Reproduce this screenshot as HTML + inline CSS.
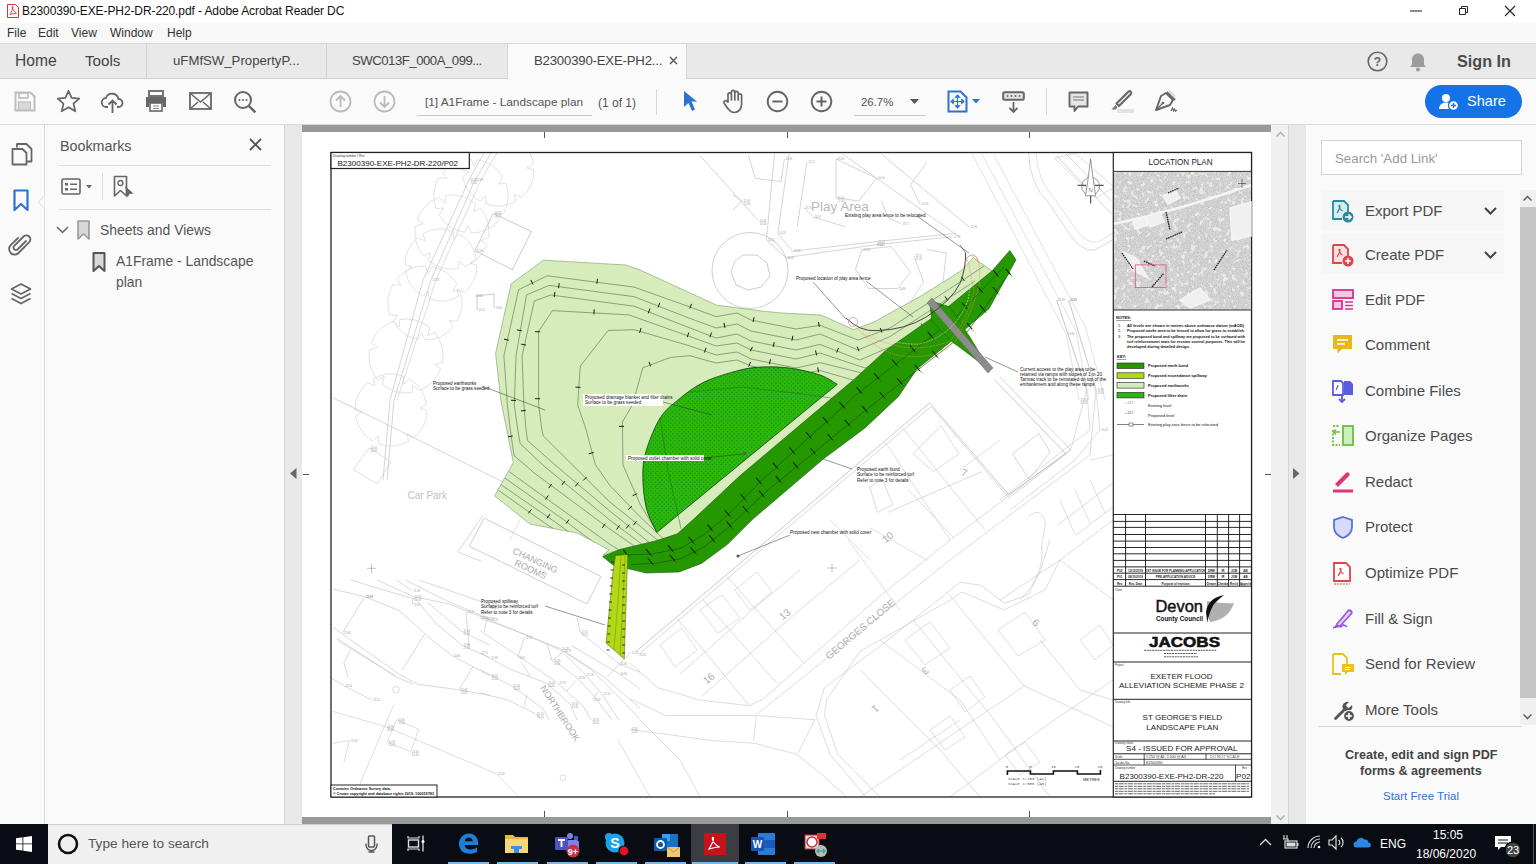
<!DOCTYPE html>
<html><head><meta charset="utf-8">
<style>
*{box-sizing:border-box;margin:0;padding:0}
html,body{width:1536px;height:864px;overflow:hidden;background:#fafafa;font-family:"Liberation Sans",sans-serif;color:#333}
.a{position:absolute}
.t{position:absolute;white-space:nowrap;line-height:1}
svg{position:absolute;overflow:visible}
</style></head><body>
<!-- title bar -->
<div class="a" style="left:0;top:0;width:1536px;height:23px;background:#fff"></div>
<svg style="left:6px;top:3px" width="14" height="16" viewBox="0 0 14 16"><path d="M1.5 1.5h8l3 3v10h-11z" fill="#fff" stroke="#d33" stroke-width="1"/><path d="M4 12c2-4 3-7 3-8s-1-1-1 0 2 5 4 6-5 0-6 2" fill="none" stroke="#d33" stroke-width="0.9"/></svg>
<div class="t" style="left:22px;top:5px;font-size:12px;color:#111;letter-spacing:-0.1px">B2300390-EXE-PH2-DR-220.pdf - Adobe Acrobat Reader DC</div>
<svg style="left:1410px;top:10px" width="12" height="2"><rect width="12" height="1" y="0.5" fill="#222"/></svg>
<svg style="left:1457px;top:5px" width="12" height="12" viewBox="0 0 12 12"><path d="M2.5 3.5h6v6h-6z M4.5 3.5v-2h6v6h-2" fill="none" stroke="#222" stroke-width="1"/></svg>
<svg style="left:1504px;top:5px" width="12" height="12" viewBox="0 0 12 12"><path d="M1 1l10 10M11 1L1 11" stroke="#222" stroke-width="1.1"/></svg>
<!-- menu bar -->
<div class="a" style="left:0;top:23px;width:1536px;height:20px;background:#f8f8f8"></div>
<div class="t" style="left:7px;top:27px;font-size:12px;color:#333">File</div>
<div class="t" style="left:38px;top:27px;font-size:12px;color:#333">Edit</div>
<div class="t" style="left:71px;top:27px;font-size:12px;color:#333">View</div>
<div class="t" style="left:110px;top:27px;font-size:12px;color:#333">Window</div>
<div class="t" style="left:167px;top:27px;font-size:12px;color:#333">Help</div>
<!-- tab bar -->
<div class="a" style="left:0;top:43px;width:1536px;height:36px;background:#e9e9e9;border-top:1px solid #d6d6d6;border-bottom:1px solid #d0d0d0"></div>
<div class="a" style="left:146px;top:44px;width:1px;height:34px;background:#d2d2d2"></div>
<div class="a" style="left:326px;top:44px;width:1px;height:34px;background:#d2d2d2"></div>
<div class="a" style="left:507px;top:44px;width:180px;height:35px;background:#fafafa;border-left:1px solid #d6d6d6;border-right:1px solid #d6d6d6"></div>
<div class="t" style="left:15px;top:53px;font-size:15.6px;color:#444">Home</div>
<div class="t" style="left:85px;top:53px;font-size:15.2px;color:#444">Tools</div>
<div class="t" style="left:173px;top:54px;font-size:13.2px;color:#444">uFMfSW_PropertyP...</div>
<div class="t" style="left:352px;top:54px;font-size:13.2px;color:#444;letter-spacing:-0.5px">SWC013F_000A_099...</div>
<div class="t" style="left:534px;top:54px;font-size:13.2px;color:#444;letter-spacing:-0.2px">B2300390-EXE-PH2...</div>
<svg style="left:669px;top:56px" width="9" height="9" viewBox="0 0 9 9"><path d="M1 1l7 7M8 1L1 8" stroke="#555" stroke-width="1.4"/></svg>
<svg style="left:1367px;top:51px" width="21" height="21" viewBox="0 0 21 21"><circle cx="10.5" cy="10.5" r="9.3" fill="none" stroke="#666" stroke-width="1.6"/><text x="10.5" y="15" text-anchor="middle" font-size="12" font-family="Liberation Sans" font-weight="700" fill="#666">?</text></svg>
<svg style="left:1409px;top:52px" width="18" height="20" viewBox="0 0 18 20"><path d="M9 1.5c3.5 0 6 2.5 6 6v5l2 2.5H1L3 12.5v-5c0-3.5 2.5-6 6-6z" fill="#9c9c9c"/><circle cx="9" cy="17.5" r="2" fill="#9c9c9c"/></svg>
<div class="t" style="left:1457px;top:53px;font-size:16.2px;font-weight:700;color:#4b4b4b">Sign In</div>
<!-- toolbar -->
<div class="a" style="left:0;top:79px;width:1536px;height:46px;background:#fafafa;border-bottom:1px solid #d9d9d9"></div>

<!-- toolbar icons -->
<svg style="left:14px;top:91px" width="22" height="21" viewBox="0 0 22 21"><path d="M1.5 1.5h15l4 4v14h-19z" fill="none" stroke="#bdbdbd" stroke-width="2"/><rect x="5" y="2" width="9" height="5" fill="none" stroke="#bdbdbd" stroke-width="1.6"/><rect x="4.5" y="11" width="12" height="8" fill="#d8d8d8" stroke="#bdbdbd" stroke-width="1.2"/></svg>
<svg style="left:56px;top:89px" width="25" height="25" viewBox="0 0 25 25"><path d="M12.5 1.8l3.1 7.1 7.7.7-5.8 5.1 1.8 7.6-6.8-4-6.8 4 1.8-7.6-5.8-5.1 7.7-.7z" fill="none" stroke="#666" stroke-width="1.7" stroke-linejoin="round"/></svg>
<svg style="left:101px;top:91px" width="23" height="23" viewBox="0 0 23 23"><path d="M7 16H5.5A4.5 4.5 0 0 1 5 7a6.5 6.5 0 0 1 12.5 1A4 4 0 0 1 17.5 16H16" fill="none" stroke="#666" stroke-width="1.8"/><path d="M11.5 22V10M7.5 13.5l4-4 4 4" fill="none" stroke="#666" stroke-width="1.8"/></svg>
<svg style="left:145px;top:90px" width="22" height="22" viewBox="0 0 22 22"><rect x="4" y="1" width="14" height="5" fill="none" stroke="#666" stroke-width="1.8"/><path d="M1 7h20v10h-3v-4H4v4H1z" fill="#666"/><rect x="5" y="13" width="12" height="8" fill="#fff" stroke="#666" stroke-width="1.6"/><path d="M8 16h6M8 18.5h6" stroke="#888" stroke-width="1"/></svg>
<svg style="left:189px;top:92px" width="23" height="18" viewBox="0 0 23 18"><rect x="1" y="1" width="21" height="16" fill="none" stroke="#666" stroke-width="1.8"/><path d="M1 1l10.5 9L22 1M1 17l8-7M22 17l-8-7" fill="none" stroke="#666" stroke-width="1.5"/></svg>
<svg style="left:233px;top:90px" width="24" height="24" viewBox="0 0 24 24"><circle cx="10" cy="10" r="8" fill="none" stroke="#666" stroke-width="2"/><path d="M15.8 15.8l6.5 6.5" stroke="#666" stroke-width="2.4"/><circle cx="6.5" cy="10" r="1" fill="#666"/><circle cx="10" cy="10" r="1" fill="#666"/><circle cx="13.5" cy="10" r="1" fill="#666"/></svg>
<svg style="left:329px;top:90px" width="23" height="23" viewBox="0 0 23 23"><circle cx="11.5" cy="11.5" r="10" fill="none" stroke="#bbb" stroke-width="1.8"/><path d="M11.5 17V6M7 10.5l4.5-4.5 4.5 4.5" fill="none" stroke="#bbb" stroke-width="1.8"/></svg>
<svg style="left:373px;top:90px" width="23" height="23" viewBox="0 0 23 23"><circle cx="11.5" cy="11.5" r="10" fill="none" stroke="#bbb" stroke-width="1.8"/><path d="M11.5 6v11M7 12.5l4.5 4.5 4.5-4.5" fill="none" stroke="#bbb" stroke-width="1.8"/></svg>
<div class="t" style="left:425px;top:97px;font-size:11.8px;color:#555">[1] A1Frame - Landscape plan</div>
<div class="a" style="left:417px;top:115px;width:175px;height:1px;background:#c8c8c8"></div>
<div class="t" style="left:598px;top:97px;font-size:12px;color:#555">(1 of 1)</div>
<div class="a" style="left:656px;top:89px;width:1px;height:26px;background:#d8d8d8"></div>
<svg style="left:683px;top:90px" width="15" height="22" viewBox="0 0 15 22"><path d="M1 1l13 10.5H8.5l3.5 8-3 1.5-3.5-8L1 17z" fill="#2d74cf"/></svg>
<svg style="left:722px;top:89px" width="24" height="25" viewBox="0 0 24 25"><path d="M6 13V5.5a1.7 1.7 0 0 1 3.4 0V11V3a1.7 1.7 0 0 1 3.4 0v8V4a1.7 1.7 0 0 1 3.4 0v7V6.5a1.7 1.7 0 0 1 3.4 0V15c0 5-3 8.5-7.5 8.5-3.5 0-5-2-7-5L2 14a1.7 1.7 0 0 1 2.8-1.8z" fill="none" stroke="#666" stroke-width="1.7" stroke-linejoin="round"/></svg>
<svg style="left:766px;top:90px" width="23" height="23" viewBox="0 0 23 23"><circle cx="11.5" cy="11.5" r="9.8" fill="none" stroke="#666" stroke-width="1.9"/><path d="M6.5 11.5h10" stroke="#666" stroke-width="2"/></svg>
<svg style="left:810px;top:90px" width="23" height="23" viewBox="0 0 23 23"><circle cx="11.5" cy="11.5" r="9.8" fill="none" stroke="#666" stroke-width="1.9"/><path d="M6.5 11.5h10M11.5 6.5v10" stroke="#666" stroke-width="2"/></svg>
<div class="t" style="left:861px;top:97px;font-size:11.4px;color:#555">26.7%</div>
<svg style="left:910px;top:99px" width="9" height="6"><path d="M0 0h9L4.5 5z" fill="#555"/></svg>
<div class="a" style="left:854px;top:115px;width:72px;height:1px;background:#c8c8c8"></div>
<svg style="left:947px;top:90px" width="21" height="23" viewBox="0 0 21 23"><path d="M1.5 1.5h12l6 6v14h-18z" fill="none" stroke="#2d74cf" stroke-width="2"/><path d="M10.5 6v11M5 11.5h11M10.5 5l-2 2.2h4zM10.5 18l-2-2.2h4zM4 11.5l2.2-2v4zM17 11.5l-2.2-2v4z" fill="#2d74cf" stroke="#2d74cf" stroke-width="1.1"/></svg>
<svg style="left:972px;top:99px" width="8" height="5"><path d="M0 0h8L4 4.5z" fill="#2d74cf"/></svg>
<svg style="left:1002px;top:91px" width="23" height="22" viewBox="0 0 23 22"><rect x="1.2" y="1.2" width="20.6" height="7.6" rx="1.5" fill="#e6e6e6" stroke="#666" stroke-width="2"/><circle cx="5.5" cy="5" r="1" fill="#666"/><circle cx="9.5" cy="5" r="1" fill="#666"/><circle cx="13.5" cy="5" r="1" fill="#666"/><circle cx="17.5" cy="5" r="1" fill="#666"/><path d="M11.5 11v10M7.5 17l4 4 4-4" fill="none" stroke="#666" stroke-width="1.8"/></svg>
<div class="a" style="left:1046px;top:88px;width:1px;height:27px;background:#d8d8d8"></div>
<svg style="left:1068px;top:91px" width="21" height="22" viewBox="0 0 21 22"><path d="M1.5 1.5h18v14H10l-3.5 4.5v-4.5h-5z" fill="#e6e6e6" stroke="#666" stroke-width="1.9" stroke-linejoin="round"/><path d="M5 6h11M5 9h11" stroke="#777" stroke-width="1"/></svg>
<svg style="left:1110px;top:89px" width="25" height="25" viewBox="0 0 25 25"><path d="M9 17l12-12a1.8 1.8 0 0 0-2.5-2.5L6.5 14.5z" fill="#e6e6e6" stroke="#666" stroke-width="2" stroke-linejoin="round"/><path d="M5.5 16l-4 4.5h4l2-2" fill="#777"/><rect x="7" y="20" width="17" height="4" fill="#e2e2e2"/></svg>
<svg style="left:1154px;top:90px" width="25" height="23" viewBox="0 0 25 23"><path d="M12 3l-5 3-5 14 14-5 3-5z" fill="none" stroke="#666" stroke-width="1.9" stroke-linejoin="round"/><path d="M13 2l8 8" stroke="#666" stroke-width="2"/><path d="M15 1l6 6" stroke="#ddd" stroke-width="2.5"/><path d="M2.5 19.5l6-6" stroke="#666" stroke-width="1.3"/><circle cx="9" cy="13" r="1.3" fill="#666"/><path d="M17 21l1.5-3 1 3 1-2 1 2 1.5-1" fill="none" stroke="#666" stroke-width="1.2"/></svg>
<div class="a" style="left:1425px;top:85px;width:97px;height:33px;border-radius:17px;background:#1473e6"></div>
<svg style="left:1439px;top:93px" width="22" height="18" viewBox="0 0 22 18"><circle cx="7" cy="5" r="4" fill="#fff"/><path d="M0 16c0-4 3-6.5 7-6.5s7 2.5 7 6.5z" fill="#fff"/><circle cx="14.5" cy="12.5" r="5" fill="#fff" stroke="#1473e6" stroke-width="1.3"/><path d="M14.5 10v5M12 12.5h5" stroke="#1473e6" stroke-width="1.4"/></svg>
<div class="t" style="left:1467px;top:94px;font-size:14.6px;color:#fff">Share</div>

<!-- left rail -->
<div class="a" style="left:0;top:125px;width:45px;height:699px;background:#fafafa;border-right:1px solid #dcdcdc"></div>
<svg style="left:11px;top:142px" width="22" height="24" viewBox="0 0 22 24"><path d="M6 5.5V2h9.5l5 5v12.5H16" fill="none" stroke="#666" stroke-width="1.8" stroke-linejoin="round"/><path d="M1.5 7h10l4 4v11.5h-14z" fill="none" stroke="#666" stroke-width="1.8" stroke-linejoin="round"/></svg>
<svg style="left:13px;top:189px" width="16" height="23" viewBox="0 0 16 23"><path d="M1.5 1.5h13v19.5l-6.5-6-6.5 6z" fill="none" stroke="#2d74cf" stroke-width="2.2" stroke-linejoin="round"/></svg>
<svg style="left:38px;top:195px" width="8" height="14"><path d="M7 0L0 7l7 7z" fill="#fafafa" stroke="#dcdcdc" stroke-width="1"/><rect x="7" y="0" width="2" height="14" fill="#fafafa"/></svg>
<svg style="left:10px;top:233px" width="22" height="24" viewBox="0 0 22 24"><path d="M16 8l-8.5 8.5a2.5 2.5 0 0 1-3.5-3.5l9.5-9.5a4 4 0 0 1 5.7 5.7L8.5 20a5.5 5.5 0 0 1-7.8-7.8L8 5" fill="none" stroke="#666" stroke-width="1.8" stroke-linecap="round"/></svg>
<svg style="left:10px;top:282px" width="22" height="24" viewBox="0 0 22 24"><path d="M11 2l9.5 5-9.5 5-9.5-5z" fill="none" stroke="#666" stroke-width="1.7" stroke-linejoin="round"/><path d="M1.5 11.5l9.5 5 9.5-5M1.5 16.5l9.5 5 9.5-5" fill="none" stroke="#666" stroke-width="1.7" stroke-linejoin="round"/></svg>
<!-- bookmarks panel -->
<div class="a" style="left:45px;top:125px;width:240px;height:699px;background:#fafafa;border-right:1px solid #d4d4d4"></div>
<div class="t" style="left:60px;top:139px;font-size:14.3px;color:#555">Bookmarks</div>
<svg style="left:249px;top:138px" width="13" height="13" viewBox="0 0 13 13"><path d="M1 1l11 11M12 1L1 12" stroke="#555" stroke-width="1.8"/></svg>
<div class="a" style="left:59px;top:165px;width:212px;height:1px;background:#dedede"></div>
<svg style="left:61px;top:178px" width="32" height="17" viewBox="0 0 32 17"><rect x="1" y="1" width="18" height="15" rx="1.5" fill="none" stroke="#666" stroke-width="1.6"/><rect x="4" y="5" width="3" height="2.5" fill="#666"/><rect x="4" y="10" width="3" height="2.5" fill="#666"/><path d="M9 6.2h7M9 11.2h7" stroke="#666" stroke-width="1.6"/><path d="M25 7h6l-3 3.5z" fill="#666"/></svg>
<div class="a" style="left:102px;top:173px;width:1px;height:27px;background:#dedede"></div>
<svg style="left:113px;top:175px" width="22" height="24" viewBox="0 0 22 24"><path d="M1.5 1.5h12v19.5l-6-5.5-6 5.5z" fill="none" stroke="#666" stroke-width="1.6" stroke-linejoin="round"/><circle cx="7.5" cy="8" r="2.5" fill="none" stroke="#666" stroke-width="1.3"/><path d="M12 11l8.5 7.5-4 .5-2 3.5z" fill="#666"/></svg>
<div class="a" style="left:59px;top:209px;width:212px;height:1px;background:#dedede"></div>
<svg style="left:56px;top:226px" width="13" height="8" viewBox="0 0 13 8"><path d="M1 1l5.5 5.5L12 1" fill="none" stroke="#666" stroke-width="1.5"/></svg>
<svg style="left:77px;top:220px" width="13" height="20" viewBox="0 0 13 20"><path d="M1 1h11v18l-5.5-5-5.5 5z" fill="#d8d8d8" stroke="#999" stroke-width="1.6" stroke-linejoin="round"/></svg>
<div class="t" style="left:100px;top:224px;font-size:13.9px;color:#555">Sheets and Views</div>
<svg style="left:92px;top:252px" width="14" height="20" viewBox="0 0 14 20"><path d="M1.5 1h11v18l-5.5-5-5.5 5z" fill="#d8d8d8" stroke="#555" stroke-width="2" stroke-linejoin="round"/></svg>
<div class="t" style="left:116px;top:255px;font-size:13.9px;color:#555">A1Frame - Landscape</div>
<div class="t" style="left:116px;top:276px;font-size:13.9px;color:#555">plan</div>
<!-- gray strips -->
<div class="a" style="left:285px;top:125px;width:17px;height:699px;background:#e8e8e8"></div>
<svg style="left:290px;top:468px" width="7" height="11"><path d="M6.5 0v11L0 5.5z" fill="#666"/></svg>
<div class="a" style="left:302px;top:125px;width:969px;height:7px;background:#999"></div>
<div class="a" style="left:302px;top:817px;width:969px;height:7px;background:#999"></div>
<div class="a" style="left:302px;top:132px;width:969px;height:685px;background:#fff"></div>
<!--DRAWING-->
<svg style="left:302px;top:132px" width="969" height="685" viewBox="302 132 969 685">
<defs>
<filter id="noise" x="0" y="0" width="100%" height="100%"><feTurbulence type="fractalNoise" baseFrequency="1.2" numOctaves="1" seed="3"/><feColorMatrix type="matrix" values="0 0 0 0 0.55  0 0 0 0 0.55  0 0 0 0 0.55  7 0 0 0 -3.3"/></filter>
<filter id="blob" x="0" y="0" width="100%" height="100%"><feTurbulence type="fractalNoise" baseFrequency="0.22" numOctaves="2" seed="7"/><feColorMatrix type="matrix" values="0 0 0 0 1  0 0 0 0 1  0 0 0 0 1  9 0 0 0 -5.2"/></filter>
<pattern id="dots" width="3.1" height="3.1" patternUnits="userSpaceOnUse" patternTransform="rotate(45)"><rect width="3.1" height="3.1" fill="#2cbb04"/><circle cx="1.5" cy="1.5" r="0.75" fill="#178a30"/></pattern>
<clipPath id="fr"><rect x="331" y="152.5" width="782" height="644.5"/></clipPath>
</defs>
<rect x="544" y="132" width="1" height="6" fill="#555"/><rect x="544" y="811" width="1" height="6" fill="#555"/>
<rect x="787" y="132" width="1" height="6" fill="#555"/><rect x="787" y="811" width="1" height="6" fill="#555"/>
<rect x="1029" y="132" width="1" height="6" fill="#555"/><rect x="1029" y="811" width="1" height="6" fill="#555"/>
<rect x="303" y="474" width="6" height="1" fill="#555"/><rect x="1265" y="474" width="6" height="1" fill="#555"/>
<g clip-path="url(#fr)"><polyline points="484.0,153.0 469.0,180.0 423.0,280.0 390.0,400.0 383.0,480.0" fill="none" stroke="#b8b8b8" stroke-width="0.6"/><polyline points="491.0,153.0 475.0,180.0 431.0,280.0 394.0,400.0 387.0,480.0" fill="none" stroke="#b8b8b8" stroke-width="0.6"/><polyline points="497.0,153.0 481.0,180.0 436.0,280.0 397.0,400.0" fill="none" stroke="#c8c8c8" stroke-width="0.6"/><path d="M534.0 170.0A36 36 0 0 1 521.5 197.3L514.2 194.1L516.0 201.2M516.0 201.2A36 36 0 0 1 486.2 204.0L485.3 196.0L480.0 201.2M480.0 201.2A36 36 0 0 1 462.6 176.7L469.1 172.0L462.0 170.0M462.0 170.0A36 36 0 0 1 474.5 142.7L481.8 145.9L480.0 138.8M480.0 138.8A36 36 0 0 1 509.8 136.0L510.7 144.0L516.0 138.8M516.0 138.8A36 36 0 0 1 533.4 163.3L526.9 168.0L534.0 170.0" fill="none" stroke="#cfcfcf" stroke-width="0.6"/><path d="M499.3 219.8A37 37 0 0 1 471.4 233.0L467.8 225.8L464.5 232.4M464.5 232.4A37 37 0 0 1 439.2 214.9L443.6 208.1L436.2 208.6M436.2 208.6A37 37 0 0 1 438.7 177.9L446.8 178.3L442.7 172.2M442.7 172.2A37 37 0 0 1 470.6 159.0L474.2 166.2L477.5 159.6M477.5 159.6A37 37 0 0 1 502.8 177.1L498.4 183.9L505.8 183.4M505.8 183.4A37 37 0 0 1 503.3 214.1L495.2 213.7L499.3 219.8" fill="none" stroke="#cfcfcf" stroke-width="0.6"/><path d="M458.3 268.5A37 37 0 0 1 428.5 260.6L430.3 252.7L423.6 255.7M423.6 255.7A37 37 0 0 1 415.5 225.9L423.2 223.6L417.3 219.2M417.3 219.2A37 37 0 0 1 439.0 197.4L444.9 202.9L445.7 195.5M445.7 195.5A37 37 0 0 1 475.5 203.4L473.7 211.3L480.4 208.3M480.4 208.3A37 37 0 0 1 488.5 238.1L480.8 240.4L486.7 244.8M486.7 244.8A37 37 0 0 1 465.0 266.6L459.1 261.1L458.3 268.5" fill="none" stroke="#cfcfcf" stroke-width="0.6"/><path d="M422.8 296.1A36 36 0 0 1 405.6 271.5L412.1 266.8L405.0 264.8M405.0 264.8A36 36 0 0 1 417.6 237.6L425.0 240.8L423.2 233.7M423.2 233.7A36 36 0 0 1 453.0 231.1L453.9 239.0L459.2 233.9M459.2 233.9A36 36 0 0 1 476.4 258.5L469.9 263.2L477.0 265.2M477.0 265.2A36 36 0 0 1 464.4 292.4L457.0 289.2L458.8 296.3M458.8 296.3A36 36 0 0 1 429.0 298.9L428.1 291.0L422.8 296.1" fill="none" stroke="#cfcfcf" stroke-width="0.6"/><path d="M390.1 315.4A37 37 0 0 1 392.8 284.7L400.9 285.2L396.8 279.0M396.8 279.0A37 37 0 0 1 424.8 266.0L428.4 273.2L431.7 266.6M431.7 266.6A37 37 0 0 1 456.9 284.3L452.5 291.0L459.9 290.6M459.9 290.6A37 37 0 0 1 457.2 321.3L449.1 320.8L453.2 327.0M453.2 327.0A37 37 0 0 1 425.2 340.0L421.6 332.8L418.3 339.4M418.3 339.4A37 37 0 0 1 393.1 321.7L397.5 315.0L390.1 315.4" fill="none" stroke="#cfcfcf" stroke-width="0.6"/><path d="M371.4 343.0A37 37 0 0 1 393.2 321.3L399.1 326.8L399.9 319.5M399.9 319.5A37 37 0 0 1 429.7 327.5L427.8 335.4L434.6 332.5M434.6 332.5A37 37 0 0 1 442.5 362.3L434.7 364.6L440.6 369.0M440.6 369.0A37 37 0 0 1 418.8 390.7L412.9 385.2L412.1 392.5M412.1 392.5A37 37 0 0 1 382.3 384.5L384.2 376.6L377.4 379.5M377.4 379.5A37 37 0 0 1 369.5 349.7L377.3 347.4L371.4 343.0" fill="none" stroke="#cfcfcf" stroke-width="0.6"/><path d="M373.4 378.6A36 36 0 0 1 403.2 376.1L404.0 384.1L409.3 379.0M409.3 379.0A36 36 0 0 1 426.4 403.7L420.0 408.3L427.0 410.4M427.0 410.4A36 36 0 0 1 414.2 437.5L406.9 434.2L408.6 441.4M408.6 441.4A36 36 0 0 1 378.8 443.9L378.0 435.9L372.7 441.0M372.7 441.0A36 36 0 0 1 355.6 416.3L362.0 411.7L355.0 409.6M355.0 409.6A36 36 0 0 1 367.8 382.5L375.1 385.8L373.4 378.6" fill="none" stroke="#cfcfcf" stroke-width="0.6"/><polyline points="475.0,296.0 494.0,294.0 494.0,308.0" fill="none" stroke="#aaa" stroke-width="0.6"/><polyline points="477.0,296.0 477.0,310.0" fill="none" stroke="#aaa" stroke-width="0.6"/><polyline points="493.2,213.4 531.4,231.6 512.3,269.8 475.0,250.7 493.2,213.4" fill="none" stroke="#aaa" stroke-width="0.6"/><polyline points="333.0,397.8 500.3,480.6 540.0,500.0" fill="none" stroke="#bbb" stroke-width="0.6"/><polyline points="369.0,447.8 391.0,461.9 377.0,483.8 353.4,469.7 369.0,447.8" fill="none" stroke="#c8c8c8" stroke-width="0.6"/><polyline points="484.0,518.2 600.8,576.4 587.0,604.0 469.4,546.2 484.0,518.2" fill="none" stroke="#b0b0b0" stroke-width="0.6"/><polyline points="482.7,515.6 457.9,552.0 481.5,561.5" fill="none" stroke="#c0c0c0" stroke-width="0.6"/><polyline points="520.0,520.0 510.0,540.0" fill="none" stroke="#d0d0d0" stroke-width="0.6"/><polyline points="332.8,589.0 364.7,596.7 399.4,610.6 430.0,638.3 452.2,655.7 490.0,675.8" fill="none" stroke="#c0c0c0" stroke-width="0.6"/><polyline points="350.8,580.0 396.7,593.9 416.1,599.4 435.6,623.1 461.9,645.3 490.0,657.8" fill="none" stroke="#c0c0c0" stroke-width="0.6"/><polyline points="377.2,580.0 413.3,596.7 448.1,603.6 490.0,620.3" fill="none" stroke="#c0c0c0" stroke-width="0.6"/><polyline points="396.7,580.0 411.9,591.1" fill="none" stroke="#c0c0c0" stroke-width="0.6"/><polyline points="405.0,580.0 446.7,600.8 490.0,618.9" fill="none" stroke="#c0c0c0" stroke-width="0.6"/><polyline points="418.9,580.0 482.8,602.2 490.0,605.0" fill="none" stroke="#c0c0c0" stroke-width="0.6"/><polyline points="427.2,602.2 461.9,631.4 490.0,645.3" fill="none" stroke="#c0c0c0" stroke-width="0.6"/><polyline points="364.7,596.7 342.5,632.8" fill="none" stroke="#c0c0c0" stroke-width="0.6"/><polyline points="424.4,634.2 402.2,670.3" fill="none" stroke="#c0c0c0" stroke-width="0.6"/><polyline points="466.1,611.9 468.9,646.7" fill="none" stroke="#c0c0c0" stroke-width="0.6"/><polyline points="473.1,666.1 459.2,689.7" fill="none" stroke="#c0c0c0" stroke-width="0.6"/><polyline points="413.3,598.1 411.9,605.0" fill="none" stroke="#c0c0c0" stroke-width="0.6"/><polyline points="332.8,627.2 399.4,674.4 417.5,684.2 457.8,689.7 490.0,695.3" fill="none" stroke="#c0c0c0" stroke-width="0.6"/><polyline points="336.9,638.3 396.7,677.2 413.3,684.2" fill="none" stroke="#c0c0c0" stroke-width="0.6"/><polyline points="338.3,641.1 395.3,675.8" fill="none" stroke="#c0c0c0" stroke-width="0.6"/><polyline points="330.0,677.2 343.9,685.6 371.7,700.0" fill="none" stroke="#c0c0c0" stroke-width="0.6"/><polyline points="350.8,649.4 343.9,663.3 348.1,677.2" fill="none" stroke="#c0c0c0" stroke-width="0.6"/><polyline points="480.0,616.0 528.6,636.1 563.3,651.4 591.1,669.4 618.9,697.2 640.0,719.4" fill="none" stroke="#c0c0c0" stroke-width="0.6"/><polyline points="480.0,618.1 507.8,627.8 560.6,648.6 605.0,677.8 640.0,708.3" fill="none" stroke="#c0c0c0" stroke-width="0.6"/><polyline points="571.7,645.8 618.9,673.6 640.0,688.9" fill="none" stroke="#c0c0c0" stroke-width="0.6"/><polyline points="480.0,630.6 521.7,658.3 557.8,683.3 582.8,705.6 591.1,720.0" fill="none" stroke="#c0c0c0" stroke-width="0.6"/><polyline points="480.0,652.8 510.6,669.4 546.7,683.3 570.3,704.2 577.2,720.0" fill="none" stroke="#c0c0c0" stroke-width="0.6"/><polyline points="480.0,669.4 511.9,686.1 542.5,708.3 549.4,720.0" fill="none" stroke="#c0c0c0" stroke-width="0.6"/><polyline points="480.0,693.1 507.8,700.0 535.6,713.9 542.5,720.0" fill="none" stroke="#c0c0c0" stroke-width="0.6"/><polyline points="556.4,662.5 577.2,677.8 593.9,695.8 611.9,720.0" fill="none" stroke="#c0c0c0" stroke-width="0.6"/><polyline points="563.3,652.8 585.6,675.0 602.2,694.4 618.9,720.0" fill="none" stroke="#c0c0c0" stroke-width="0.6"/><polyline points="577.2,618.1 580.0,631.9 618.9,663.9 640.0,672.2" fill="none" stroke="#c0c0c0" stroke-width="0.6"/><polyline points="607.8,676.4 630.0,652.8" fill="none" stroke="#c0c0c0" stroke-width="0.6"/><polyline points="524.4,637.5 517.5,658.3" fill="none" stroke="#c0c0c0" stroke-width="0.6"/><polyline points="546.7,643.1 552.2,661.1 563.3,651.4" fill="none" stroke="#c0c0c0" stroke-width="0.6"/><polyline points="521.7,662.5 530.0,676.4" fill="none" stroke="#c0c0c0" stroke-width="0.6"/><polyline points="575.8,680.6 566.1,691.7" fill="none" stroke="#c0c0c0" stroke-width="0.6"/><polyline points="598.1,691.7 592.5,700.0" fill="none" stroke="#c0c0c0" stroke-width="0.6"/><polyline points="527.2,694.4 524.4,705.6" fill="none" stroke="#c0c0c0" stroke-width="0.6"/><polyline points="486.9,619.4 484.2,631.9" fill="none" stroke="#c0c0c0" stroke-width="0.6"/><polyline points="640.0,720.0 680.0,760.0 700.0,797.0" fill="none" stroke="#c8c8c8" stroke-width="0.6"/><polyline points="618.0,740.0 650.0,797.0" fill="none" stroke="#c8c8c8" stroke-width="0.6"/><polyline points="396.7,719.7 418.9,729.4 410.6,751.7 387.0,742.0 396.7,719.7" fill="none" stroke="#c8c8c8" stroke-width="0.6"/><polyline points="332.8,711.4 385.6,726.7 496.7,773.9 518.9,797.0" fill="none" stroke="#c8c8c8" stroke-width="0.6"/><polyline points="393.9,704.4 360.6,782.2 356.0,797.0" fill="none" stroke="#c8c8c8" stroke-width="0.6"/><polyline points="332.8,743.3 349.4,740.6 343.9,762.8" fill="none" stroke="#c8c8c8" stroke-width="0.6"/><circle cx="396" cy="689.7" r="3.3" fill="none" stroke="#bbb" stroke-width="0.5"/><circle cx="563" cy="778" r="3" fill="none" stroke="#bbb" stroke-width="0.5"/><path d="M367 568.3h9M371.5 564v9M827.5 568h9M832 563.5v9" stroke="#999" stroke-width="0.6"/><polyline points="630.0,662.8 657.8,687.8 700.0,700.0 749.4,705.8 763.3,698.9 880.0,596.0 950.4,540.0 1071.0,448.7 1086.7,390.0 1056.6,300.0" fill="none" stroke="#c4c4c4" stroke-width="0.6"/><polyline points="630.0,698.9 666.0,715.6 755.0,715.6 880.0,615.6 950.0,560.0 1090.0,455.0 1096.0,390.0 1068.7,300.0" fill="none" stroke="#c4c4c4" stroke-width="0.6"/><polyline points="1049.8,540.0 1040.7,570.1 1028.7,594.2 1004.6,603.3 980.5,585.2 959.4,582.2 947.3,592.7 880.0,646.0 824.4,687.8 816.0,715.6 830.0,754.4 866.0,797.0" fill="none" stroke="#c4c4c4" stroke-width="0.6"/><polyline points="1113.0,520.0 1060.0,560.0 1045.0,590.0 1004.0,610.0 962.0,592.0 950.4,600.0 860.0,651.4 827.0,698.9 824.4,715.6 838.0,754.4 880.0,797.0" fill="none" stroke="#c4c4c4" stroke-width="0.6"/><polyline points="630.0,729.4 713.0,740.6 755.0,743.3 796.7,754.4 824.4,776.7 846.7,797.0" fill="none" stroke="#c4c4c4" stroke-width="0.6"/><polyline points="756.4,715.6 753.6,740.6" fill="none" stroke="#c4c4c4" stroke-width="0.6"/><polyline points="756.4,715.6 814.7,719.7" fill="none" stroke="#c4c4c4" stroke-width="0.6"/><polyline points="814.7,719.7 798.0,753.0" fill="none" stroke="#c4c4c4" stroke-width="0.6"/><polyline points="677.2,618.3 749.4,705.8" fill="none" stroke="#c4c4c4" stroke-width="0.6"/><polyline points="702.2,598.9 777.2,683.6" fill="none" stroke="#c4c4c4" stroke-width="0.6"/><polyline points="727.2,576.7 803.6,662.8" fill="none" stroke="#c4c4c4" stroke-width="0.6"/><polyline points="680.0,674.0 752.2,610.0 800.0,570.0" fill="none" stroke="#c4c4c4" stroke-width="0.6"/><polyline points="702.2,696.0 799.4,610.0 860.0,560.0" fill="none" stroke="#c4c4c4" stroke-width="0.6"/><polyline points="948.9,594.2 1024.2,686.0 1113.0,726.7" fill="none" stroke="#c4c4c4" stroke-width="0.6"/><polyline points="1024.2,686.0 860.0,797.0" fill="none" stroke="#c4c4c4" stroke-width="0.6"/><polyline points="914.2,621.3 992.5,717.7 1050.0,797.0" fill="none" stroke="#c4c4c4" stroke-width="0.6"/><polyline points="860.0,669.5 940.0,750.0 980.0,797.0" fill="none" stroke="#c4c4c4" stroke-width="0.6"/><polyline points="880.0,640.0 960.0,700.0 1000.0,760.0" fill="none" stroke="#c4c4c4" stroke-width="0.6"/><polyline points="1000.0,600.0 1060.0,560.0 1113.0,600.0" fill="none" stroke="#c4c4c4" stroke-width="0.6"/><polyline points="1040.0,640.0 1080.0,690.0 1113.0,700.0" fill="none" stroke="#c4c4c4" stroke-width="0.6"/><polyline points="900.0,760.0 960.0,720.0" fill="none" stroke="#c4c4c4" stroke-width="0.6"/><polyline points="950.0,797.0 1040.0,730.0 1113.0,680.0" fill="none" stroke="#c4c4c4" stroke-width="0.6"/><polyline points="700.0,610.0 722.0,595.0 740.0,618.0 718.0,633.0 700.0,610.0" fill="none" stroke="#c8c8c8" stroke-width="0.6"/><polyline points="735.0,590.0 757.0,572.0 772.0,592.0 750.0,610.0 735.0,590.0" fill="none" stroke="#c8c8c8" stroke-width="0.6"/><polyline points="660.0,645.0 682.0,628.0 697.0,650.0 675.0,667.0 660.0,645.0" fill="none" stroke="#c8c8c8" stroke-width="0.6"/><polyline points="905.0,640.0 930.0,622.0 950.0,648.0 925.0,665.0 905.0,640.0" fill="none" stroke="#c8c8c8" stroke-width="0.6"/><polyline points="998.0,630.0 1025.0,612.0 1045.0,640.0 1018.0,656.0 998.0,630.0" fill="none" stroke="#c8c8c8" stroke-width="0.6"/><polyline points="950.0,690.0 970.0,676.0 985.0,697.0 965.0,712.0 950.0,690.0" fill="none" stroke="#c8c8c8" stroke-width="0.6"/><polyline points="1080.0,640.0 1100.0,625.0 1113.0,645.0 1095.0,660.0 1080.0,640.0" fill="none" stroke="#c8c8c8" stroke-width="0.6"/><polyline points="1005.0,755.0 1025.0,742.0 1040.0,762.0 1020.0,775.0 1005.0,755.0" fill="none" stroke="#c8c8c8" stroke-width="0.6"/><polyline points="930.0,730.0 950.0,716.0 965.0,737.0 945.0,750.0 930.0,730.0" fill="none" stroke="#c8c8c8" stroke-width="0.6"/><polyline points="700.0,155.6 758.3,220.5" fill="none" stroke="#b8b8b8" stroke-width="0.6"/><polyline points="774.5,154.0 766.4,239.9 785.9,257.7 875.0,244.8 952.8,236.7" fill="none" stroke="#b8b8b8" stroke-width="0.6"/><polyline points="789.1,154.0 777.8,233.4 792.4,251.2 876.6,241.5 956.0,233.4" fill="none" stroke="#b8b8b8" stroke-width="0.6"/><polyline points="748.6,155.6 755.1,178.3 781.0,181.6 784.3,158.9" fill="none" stroke="#b8b8b8" stroke-width="0.6"/><polyline points="836.1,158.9 876.6,178.3 858.8,201.0 836.1,197.8 836.1,158.9" fill="none" stroke="#b8b8b8" stroke-width="0.6"/><polyline points="842.6,154.0 959.2,236.7" fill="none" stroke="#b8b8b8" stroke-width="0.6"/><polyline points="881.5,154.0 969.0,226.9" fill="none" stroke="#b8b8b8" stroke-width="0.6"/><polyline points="806.9,162.1 797.2,226.9" fill="none" stroke="#b8b8b8" stroke-width="0.6"/><polyline points="803.7,207.5 813.4,217.2 845.8,226.9" fill="none" stroke="#b8b8b8" stroke-width="0.6"/><polyline points="862.0,249.6 891.2,246.4 910.6,272.3 897.7,288.5 868.5,288.5 855.5,269.1 862.0,249.6" fill="none" stroke="#b8b8b8" stroke-width="0.6"/><polyline points="913.9,256.1 923.6,282.0 910.6,301.5" fill="none" stroke="#b8b8b8" stroke-width="0.6"/><polyline points="926.8,249.6 946.3,252.9 943.0,282.0" fill="none" stroke="#b8b8b8" stroke-width="0.6"/><polyline points="1056.4,155.6 1111.5,214.0" fill="none" stroke="#b8b8b8" stroke-width="0.6"/><polyline points="1066.2,154.0 1111.5,201.0" fill="none" stroke="#b8b8b8" stroke-width="0.6"/><polyline points="732.4,194.5 742.1,201.0 732.4,210.7" fill="none" stroke="#b8b8b8" stroke-width="0.6"/><polyline points="881.5,201.0 887.9,217.2 900.9,223.7" fill="none" stroke="#b8b8b8" stroke-width="0.6"/><polyline points="926.8,162.1 910.6,184.8 920.3,204.3" fill="none" stroke="#b8b8b8" stroke-width="0.6"/><polyline points="972.2,154.0 1066.2,333.9 1079.1,400.0" fill="none" stroke="#cfcfcf" stroke-width="0.6"/><polyline points="981.9,154.0 1075.9,330.6 1088.9,400.0" fill="none" stroke="#cfcfcf" stroke-width="0.6"/><polyline points="993.3,154.0 1085.6,327.4 1105.1,400.0" fill="none" stroke="#cfcfcf" stroke-width="0.6"/><path d="M1028.5 153 Q1030 185 1048 202 L1069 233 Q1080 252 1095 250 L1113 239.6" fill="none" stroke="#c0c0c0" stroke-width="0.6"/><path d="M1036 153 Q1038 182 1054 198 L1075 228 Q1085 244 1098 242 L1113 233" fill="none" stroke="#d0d0d0" stroke-width="0.6"/><path d="M1054.6 158.3 L1075 153 M1054.6 158.3 L1096 198 L1113 188 M1075 153 L1113 186" fill="none" stroke="#c8c8c8" stroke-width="0.6"/><polyline points="1056.6,300.0 1086.7,390.0 1090.0,430.0 1062.7,450.6 1000.0,500.0" fill="none" stroke="#c4c4c4" stroke-width="0.6"/><polyline points="1068.7,300.0 1096.0,390.0 1100.0,430.0 1075.0,460.0 1010.0,510.0" fill="none" stroke="#c4c4c4" stroke-width="0.6"/><polyline points="635.6,651.7 740.0,563.3 929.7,402.9 1008.6,494.6 1065.9,453.8 994.6,380.0" fill="none" stroke="#a8a8a8" stroke-width="0.6"/><polyline points="638.0,655.0 741.0,567.0 931.0,406.5 1009.0,498.0 1071.0,450.0 1000.0,377.0" fill="none" stroke="#c0c0c0" stroke-width="0.6"/><polyline points="913.0,453.8 941.0,425.8 959.0,453.8 933.5,471.6 913.0,453.8" fill="none" stroke="#c4c4c4" stroke-width="0.6"/><polyline points="869.8,487.0 882.6,479.3 892.7,504.7 877.5,512.4 869.8,487.0" fill="none" stroke="#c4c4c4" stroke-width="0.6"/><polyline points="903.0,428.4 985.0,530.0" fill="none" stroke="#c4c4c4" stroke-width="0.6"/><polyline points="885.0,442.0 950.0,540.0" fill="none" stroke="#c8c8c8" stroke-width="0.6"/><polyline points="887.6,512.4 981.9,471.6" fill="none" stroke="#c4c4c4" stroke-width="0.6"/><polyline points="869.8,527.7 928.4,560.8" fill="none" stroke="#c8c8c8" stroke-width="0.6"/><polyline points="908.0,489.5 953.8,537.8" fill="none" stroke="#c8c8c8" stroke-width="0.6"/><polyline points="848.0,540.0 900.0,610.0" fill="none" stroke="#c8c8c8" stroke-width="0.6"/><polyline points="830.0,520.0 870.0,560.0" fill="none" stroke="#c8c8c8" stroke-width="0.6"/><polyline points="960.0,470.0 1000.0,440.0" fill="none" stroke="#c8c8c8" stroke-width="0.6"/><polyline points="1012.4,453.8 1039.0,433.5 1050.0,452.0 1029.0,479.3 1012.4,453.8" fill="none" stroke="#b8b8b8" stroke-width="0.6"/><polyline points="1058.0,525.0 1114.0,482.0" fill="none" stroke="#c4c4c4" stroke-width="0.6"/><polyline points="1076.0,535.0 1113.0,507.0" fill="none" stroke="#c4c4c4" stroke-width="0.6"/><polyline points="1060.0,500.0 1075.0,535.0" fill="none" stroke="#c8c8c8" stroke-width="0.6"/><polyline points="1075.0,490.0 1090.0,523.0" fill="none" stroke="#c8c8c8" stroke-width="0.6"/><polyline points="1090.0,480.0 1105.0,513.0" fill="none" stroke="#c8c8c8" stroke-width="0.6"/><polyline points="1090.0,460.0 1113.0,455.0" fill="none" stroke="#c8c8c8" stroke-width="0.6"/><path d="M1027.7 517.5 Q1040 505 1045.5 522.6 L1041.7 545.5 Q1045 575 1020 600" fill="none" stroke="#c4c4c4" stroke-width="0.6"/><circle cx="750" cy="270.5" r="38" fill="none" stroke="#b0b0b0" stroke-width="0.6"/><polygon points="743.0,255.0 757.0,255.0 767.0,263.0 770.0,276.0 761.0,287.0 748.0,290.0 736.0,285.0 731.0,272.0 735.0,261.0" fill="none" stroke="#aaa" stroke-width="0.6"/><text x="470.5" y="181.0" font-size="2.6" font-family="Liberation Sans" fill="#9a9caa">25.40</text><text x="470.5" y="184.0" font-size="2.6" font-family="Liberation Sans" fill="#9a9caa">25.40</text><text x="476.5" y="181.0" font-size="2.6" font-family="Liberation Sans" fill="#9a9caa">22.99</text><text x="432.5" y="281.0" font-size="2.6" font-family="Liberation Sans" fill="#9a9caa">22.38</text><text x="476.5" y="297.0" font-size="2.6" font-family="Liberation Sans" fill="#9a9caa">25.63</text><text x="495.5" y="309.0" font-size="2.6" font-family="Liberation Sans" fill="#9a9caa">23.56</text><text x="478.5" y="311.0" font-size="2.6" font-family="Liberation Sans" fill="#9a9caa">20.13</text><text x="494.7" y="214.4" font-size="2.6" font-family="Liberation Sans" fill="#9a9caa">24.78</text><text x="494.7" y="217.4" font-size="2.6" font-family="Liberation Sans" fill="#9a9caa">24.78</text><text x="476.5" y="251.7" font-size="2.6" font-family="Liberation Sans" fill="#9a9caa">21.46</text><text x="370.5" y="448.8" font-size="2.6" font-family="Liberation Sans" fill="#9a9caa">25.64</text><text x="370.5" y="451.8" font-size="2.6" font-family="Liberation Sans" fill="#9a9caa">25.64</text><text x="366.2" y="597.7" font-size="2.6" font-family="Liberation Sans" fill="#9a9caa">21.58</text><text x="453.7" y="656.7" font-size="2.6" font-family="Liberation Sans" fill="#9a9caa">20.80</text><text x="491.5" y="676.8" font-size="2.6" font-family="Liberation Sans" fill="#9a9caa">23.02</text><text x="491.5" y="679.8" font-size="2.6" font-family="Liberation Sans" fill="#9a9caa">23.02</text><text x="463.4" y="646.3" font-size="2.6" font-family="Liberation Sans" fill="#9a9caa">27.68</text><text x="463.4" y="649.3" font-size="2.6" font-family="Liberation Sans" fill="#9a9caa">27.68</text><text x="491.5" y="658.8" font-size="2.6" font-family="Liberation Sans" fill="#9a9caa">25.99</text><text x="414.8" y="597.7" font-size="2.6" font-family="Liberation Sans" fill="#9a9caa">25.59</text><text x="414.8" y="600.7" font-size="2.6" font-family="Liberation Sans" fill="#9a9caa">25.59</text><text x="491.5" y="621.3" font-size="2.6" font-family="Liberation Sans" fill="#9a9caa">21.28</text><text x="413.4" y="592.1" font-size="2.6" font-family="Liberation Sans" fill="#9a9caa">21.93</text><text x="491.5" y="606.0" font-size="2.6" font-family="Liberation Sans" fill="#9a9caa">26.25</text><text x="491.5" y="609.0" font-size="2.6" font-family="Liberation Sans" fill="#9a9caa">26.25</text><text x="463.4" y="632.4" font-size="2.6" font-family="Liberation Sans" fill="#9a9caa">21.04</text><text x="463.4" y="635.4" font-size="2.6" font-family="Liberation Sans" fill="#9a9caa">21.04</text><text x="366.2" y="597.7" font-size="2.6" font-family="Liberation Sans" fill="#9a9caa">25.93</text><text x="344.0" y="633.8" font-size="2.6" font-family="Liberation Sans" fill="#9a9caa">21.68</text><text x="467.6" y="612.9" font-size="2.6" font-family="Liberation Sans" fill="#9a9caa">21.07</text><text x="460.7" y="690.7" font-size="2.6" font-family="Liberation Sans" fill="#9a9caa">20.48</text><text x="460.7" y="693.7" font-size="2.6" font-family="Liberation Sans" fill="#9a9caa">20.48</text><text x="413.4" y="606.0" font-size="2.6" font-family="Liberation Sans" fill="#9a9caa">22.81</text><text x="345.4" y="686.6" font-size="2.6" font-family="Liberation Sans" fill="#9a9caa">23.50</text><text x="373.2" y="701.0" font-size="2.6" font-family="Liberation Sans" fill="#9a9caa">25.24</text><text x="481.5" y="619.1" font-size="2.6" font-family="Liberation Sans" fill="#9a9caa">22.54</text><text x="562.1" y="649.6" font-size="2.6" font-family="Liberation Sans" fill="#9a9caa">24.78</text><text x="620.4" y="674.6" font-size="2.6" font-family="Liberation Sans" fill="#9a9caa">20.84</text><text x="559.3" y="684.3" font-size="2.6" font-family="Liberation Sans" fill="#9a9caa">25.97</text><text x="592.6" y="721.0" font-size="2.6" font-family="Liberation Sans" fill="#9a9caa">26.42</text><text x="592.6" y="724.0" font-size="2.6" font-family="Liberation Sans" fill="#9a9caa">26.42</text><text x="481.5" y="653.8" font-size="2.6" font-family="Liberation Sans" fill="#9a9caa">27.15</text><text x="548.2" y="684.3" font-size="2.6" font-family="Liberation Sans" fill="#9a9caa">20.44</text><text x="548.2" y="687.3" font-size="2.6" font-family="Liberation Sans" fill="#9a9caa">20.44</text><text x="571.8" y="705.2" font-size="2.6" font-family="Liberation Sans" fill="#9a9caa">25.05</text><text x="571.8" y="708.2" font-size="2.6" font-family="Liberation Sans" fill="#9a9caa">25.05</text><text x="513.4" y="687.1" font-size="2.6" font-family="Liberation Sans" fill="#9a9caa">20.40</text><text x="513.4" y="690.1" font-size="2.6" font-family="Liberation Sans" fill="#9a9caa">20.40</text><text x="537.1" y="714.9" font-size="2.6" font-family="Liberation Sans" fill="#9a9caa">26.10</text><text x="537.1" y="717.9" font-size="2.6" font-family="Liberation Sans" fill="#9a9caa">26.10</text><text x="578.7" y="678.8" font-size="2.6" font-family="Liberation Sans" fill="#9a9caa">25.90</text><text x="587.1" y="676.0" font-size="2.6" font-family="Liberation Sans" fill="#9a9caa">27.26</text><text x="603.7" y="695.4" font-size="2.6" font-family="Liberation Sans" fill="#9a9caa">21.76</text><text x="581.5" y="632.9" font-size="2.6" font-family="Liberation Sans" fill="#9a9caa">27.51</text><text x="581.5" y="635.9" font-size="2.6" font-family="Liberation Sans" fill="#9a9caa">27.51</text><text x="620.4" y="664.9" font-size="2.6" font-family="Liberation Sans" fill="#9a9caa">25.84</text><text x="631.5" y="653.8" font-size="2.6" font-family="Liberation Sans" fill="#9a9caa">21.18</text><text x="525.9" y="638.5" font-size="2.6" font-family="Liberation Sans" fill="#9a9caa">22.57</text><text x="519.0" y="659.3" font-size="2.6" font-family="Liberation Sans" fill="#9a9caa">26.91</text><text x="553.7" y="662.1" font-size="2.6" font-family="Liberation Sans" fill="#9a9caa">26.30</text><text x="553.7" y="665.1" font-size="2.6" font-family="Liberation Sans" fill="#9a9caa">26.30</text><text x="564.8" y="652.4" font-size="2.6" font-family="Liberation Sans" fill="#9a9caa">26.73</text><text x="594.0" y="701.0" font-size="2.6" font-family="Liberation Sans" fill="#9a9caa">24.56</text><text x="488.4" y="620.4" font-size="2.6" font-family="Liberation Sans" fill="#9a9caa">25.87</text><text x="412.1" y="752.7" font-size="2.6" font-family="Liberation Sans" fill="#9a9caa">23.43</text><text x="412.1" y="755.7" font-size="2.6" font-family="Liberation Sans" fill="#9a9caa">23.43</text><text x="388.5" y="743.0" font-size="2.6" font-family="Liberation Sans" fill="#9a9caa">20.74</text><text x="388.5" y="746.0" font-size="2.6" font-family="Liberation Sans" fill="#9a9caa">20.74</text><text x="398.2" y="720.7" font-size="2.6" font-family="Liberation Sans" fill="#9a9caa">25.60</text><text x="398.2" y="723.7" font-size="2.6" font-family="Liberation Sans" fill="#9a9caa">25.60</text><text x="387.1" y="727.7" font-size="2.6" font-family="Liberation Sans" fill="#9a9caa">26.36</text><text x="387.1" y="730.7" font-size="2.6" font-family="Liberation Sans" fill="#9a9caa">26.36</text><text x="498.2" y="774.9" font-size="2.6" font-family="Liberation Sans" fill="#9a9caa">22.56</text><text x="350.9" y="741.6" font-size="2.6" font-family="Liberation Sans" fill="#9a9caa">22.35</text><text x="1058.1" y="301.0" font-size="2.6" font-family="Liberation Sans" fill="#9a9caa">20.98</text><text x="1097.5" y="391.0" font-size="2.6" font-family="Liberation Sans" fill="#9a9caa">25.95</text><text x="1097.5" y="394.0" font-size="2.6" font-family="Liberation Sans" fill="#9a9caa">25.95</text><text x="1070.2" y="301.0" font-size="2.6" font-family="Liberation Sans" fill="#9a9caa">22.96</text><text x="631.5" y="730.4" font-size="2.6" font-family="Liberation Sans" fill="#9a9caa">22.82</text><text x="631.5" y="733.4" font-size="2.6" font-family="Liberation Sans" fill="#9a9caa">22.82</text><text x="759.8" y="221.5" font-size="2.6" font-family="Liberation Sans" fill="#9a9caa">26.03</text><text x="759.8" y="224.5" font-size="2.6" font-family="Liberation Sans" fill="#9a9caa">26.03</text><text x="767.9" y="240.9" font-size="2.6" font-family="Liberation Sans" fill="#9a9caa">20.02</text><text x="787.4" y="258.7" font-size="2.6" font-family="Liberation Sans" fill="#9a9caa">24.49</text><text x="876.5" y="245.8" font-size="2.6" font-family="Liberation Sans" fill="#9a9caa">21.02</text><text x="954.3" y="237.7" font-size="2.6" font-family="Liberation Sans" fill="#9a9caa">27.81</text><text x="779.3" y="234.4" font-size="2.6" font-family="Liberation Sans" fill="#9a9caa">20.23</text><text x="793.9" y="252.2" font-size="2.6" font-family="Liberation Sans" fill="#9a9caa">26.45</text><text x="878.1" y="242.5" font-size="2.6" font-family="Liberation Sans" fill="#9a9caa">25.82</text><text x="878.1" y="245.5" font-size="2.6" font-family="Liberation Sans" fill="#9a9caa">25.82</text><text x="785.8" y="159.9" font-size="2.6" font-family="Liberation Sans" fill="#9a9caa">26.96</text><text x="878.1" y="179.3" font-size="2.6" font-family="Liberation Sans" fill="#9a9caa">24.00</text><text x="837.6" y="198.8" font-size="2.6" font-family="Liberation Sans" fill="#9a9caa">22.04</text><text x="837.6" y="201.8" font-size="2.6" font-family="Liberation Sans" fill="#9a9caa">22.04</text><text x="837.6" y="159.9" font-size="2.6" font-family="Liberation Sans" fill="#9a9caa">23.98</text><text x="970.5" y="227.9" font-size="2.6" font-family="Liberation Sans" fill="#9a9caa">22.90</text><text x="808.4" y="163.1" font-size="2.6" font-family="Liberation Sans" fill="#9a9caa">22.12</text><text x="805.2" y="208.5" font-size="2.6" font-family="Liberation Sans" fill="#9a9caa">21.75</text><text x="814.9" y="218.2" font-size="2.6" font-family="Liberation Sans" fill="#9a9caa">24.07</text><text x="899.2" y="289.5" font-size="2.6" font-family="Liberation Sans" fill="#9a9caa">20.89</text><text x="863.5" y="250.6" font-size="2.6" font-family="Liberation Sans" fill="#9a9caa">24.59</text><text x="915.4" y="257.1" font-size="2.6" font-family="Liberation Sans" fill="#9a9caa">22.74</text><text x="915.4" y="260.1" font-size="2.6" font-family="Liberation Sans" fill="#9a9caa">22.74</text><text x="912.1" y="302.5" font-size="2.6" font-family="Liberation Sans" fill="#9a9caa">23.62</text><text x="912.1" y="305.5" font-size="2.6" font-family="Liberation Sans" fill="#9a9caa">23.62</text><text x="743.6" y="202.0" font-size="2.6" font-family="Liberation Sans" fill="#9a9caa">22.00</text><text x="743.6" y="205.0" font-size="2.6" font-family="Liberation Sans" fill="#9a9caa">22.00</text><text x="902.4" y="224.7" font-size="2.6" font-family="Liberation Sans" fill="#9a9caa">23.71</text><text x="921.8" y="205.3" font-size="2.6" font-family="Liberation Sans" fill="#9a9caa">20.53</text><text x="1067.7" y="334.9" font-size="2.6" font-family="Liberation Sans" fill="#9a9caa">27.80</text><text x="1080.6" y="401.0" font-size="2.6" font-family="Liberation Sans" fill="#9a9caa">23.56</text><text x="1080.6" y="404.0" font-size="2.6" font-family="Liberation Sans" fill="#9a9caa">23.56</text><text x="1070.2" y="301.0" font-size="2.6" font-family="Liberation Sans" fill="#9a9caa">20.03</text><text x="1101.5" y="431.0" font-size="2.6" font-family="Liberation Sans" fill="#9a9caa">20.26</text><text x="639.5" y="656.0" font-size="2.6" font-family="Liberation Sans" fill="#9a9caa">23.26</text></g>
<clipPath id="lg"><polygon points="543.5,260.2 625.8,265.0 639.6,269.8 716.7,305.2 760.0,310.8 781.7,313.0 821.0,315.0 853.5,329.6 873.3,322.3 921.0,296.0 960.8,271.0 973.3,257.7 992.0,271.0 948.3,306.7 885.8,350.4 853.5,380.0 740.0,475.8 692.8,520.0 677.2,534.0 656.4,540.8 620.0,549.5 603.0,555.0 609.2,550.0 577.9,533.3 530.0,524.0 494.6,495.8 513.3,462.5 500.8,400.0 495.6,353.5 511.2,283.8"/></clipPath>
<polygon points="543.5,260.2 625.8,265.0 639.6,269.8 716.7,305.2 760.0,310.8 781.7,313.0 821.0,315.0 853.5,329.6 873.3,322.3 921.0,296.0 960.8,271.0 973.3,257.7 992.0,271.0 948.3,306.7 885.8,350.4 853.5,380.0 740.0,475.8 692.8,520.0 677.2,534.0 656.4,540.8 620.0,549.5 603.0,555.0 609.2,550.0 577.9,533.3 530.0,524.0 494.6,495.8 513.3,462.5 500.8,400.0 495.6,353.5 511.2,283.8" fill="#d7ecbb" stroke="#7a9a6a" stroke-width="0.6"/>
<g clip-path="url(#lg)"><polyline points="640.4,550.3 610.0,529.2 535.1,473.6 514.1,455.6 510.3,430.0 507.4,405.0 503.9,355.7 518.6,289.7 547.3,275.8 634.1,287.1 690.0,307.0 716.0,316.6 737.0,313.0 751.0,320.0 796.0,329.0 820.0,325.3 858.0,340.0 890.0,328.0 960.0,282.0 990.0,262.0" fill="none" stroke="#5a6a50" stroke-width="0.6"/><polyline points="647.9,548.8 610.0,520.2 544.1,466.1 520.1,443.5 517.8,430.0 514.3,405.0 516.0,355.7 526.5,295.0 549.0,285.4 634.1,296.7 690.0,318.4 716.0,328.0 737.0,324.0 751.0,331.0 796.0,340.0 820.0,334.0 858.0,350.0 890.0,336.6 975.0,281.0" fill="none" stroke="#5a6a50" stroke-width="0.6"/><polyline points="655.4,547.3 610.0,511.2 554.7,464.6 527.6,440.5 526.1,430.0 523.9,405.0 522.1,355.7 534.3,301.0 550.8,295.0 634.1,306.2 690.0,328.0 716.0,338.0 737.0,334.0 751.0,341.0 796.0,350.0 820.0,344.4 860.0,360.0 890.0,347.0 950.0,310.0" fill="none" stroke="#5a6a50" stroke-width="0.6"/><polyline points="662.9,544.3 610.0,502.2 543.4,436.0 541.9,430.0 538.6,405.0 538.6,331.4 552.5,310.6 628.9,314.9 690.0,336.6 716.0,346.0 737.0,343.0 751.0,350.0 796.0,359.0 820.0,353.0 865.0,368.0 890.0,359.0 925.0,335.0" fill="none" stroke="#5a6a50" stroke-width="0.6"/><polyline points="662.9,538.3 640.4,517.2 610.0,485.6 595.3,464.6 586.2,430.0 577.7,405.0 580.3,366.1 608.0,330.5 634.1,329.7 690.0,346.0 716.0,355.0 737.0,352.0 751.0,359.0 796.0,368.0 820.0,362.6 870.0,375.0 890.0,366.0" fill="none" stroke="#5a6a50" stroke-width="0.6"/><polyline points="657.0,532.0 640.0,504.0 623.0,465.0 622.4,422.0 632.4,405.0 642.8,367.8 670.6,357.4 690.0,355.7 716.0,363.0 737.0,360.0 751.0,366.0 796.0,375.0 820.0,370.5 860.0,382.0" fill="none" stroke="#5a6a50" stroke-width="0.6"/><polyline points="508.8,471.4 568.2,514.2 610.0,544.3 619.3,550.3" fill="none" stroke="#5a6a50" stroke-width="0.6"/><polyline points="505.0,478.1 562.2,518.7 604.3,550.3" fill="none" stroke="#5a6a50" stroke-width="0.6"/><polyline points="501.3,484.9 554.7,521.7 593.8,550.3" fill="none" stroke="#5a6a50" stroke-width="0.6"/><polyline points="498.3,490.2 547.1,524.7 581.7,545.8" fill="none" stroke="#5a6a50" stroke-width="0.6"/><path d="M602.3 527.9L605.2 523.8" stroke="#1a1a1a" stroke-width="1"/><path d="M548.7 488.1L551.7 484.0" stroke="#1a1a1a" stroke-width="1"/><path d="M507.8 436.8L512.7 436.0" stroke="#1a1a1a" stroke-width="1"/><path d="M504.0 339.2L508.9 340.2" stroke="#1a1a1a" stroke-width="1"/><path d="M530.8 279.9L533.0 284.4" stroke="#1a1a1a" stroke-width="1"/><path d="M597.5 278.8L596.9 283.8" stroke="#1a1a1a" stroke-width="1"/><path d="M691.6 303.9L689.8 308.5" stroke="#1a1a1a" stroke-width="1"/><path d="M754.1 317.1L753.1 322.0" stroke="#1a1a1a" stroke-width="1"/><path d="M818.5 322.0L819.3 326.9" stroke="#1a1a1a" stroke-width="1"/><path d="M880.2 327.9L882.0 332.6" stroke="#1a1a1a" stroke-width="1"/><path d="M961.6 276.8L964.3 280.9" stroke="#1a1a1a" stroke-width="1"/><path d="M616.5 529.5L619.5 525.5" stroke="#1a1a1a" stroke-width="1"/><path d="M561.8 485.1L564.9 481.2" stroke="#1a1a1a" stroke-width="1"/><path d="M511.0 400.3L516.0 400.4" stroke="#1a1a1a" stroke-width="1"/><path d="M516.9 329.9L521.8 330.8" stroke="#1a1a1a" stroke-width="1"/><path d="M559.2 283.2L558.5 288.2" stroke="#1a1a1a" stroke-width="1"/><path d="M659.8 302.9L658.0 307.6" stroke="#1a1a1a" stroke-width="1"/><path d="M724.0 322.9L724.9 327.8" stroke="#1a1a1a" stroke-width="1"/><path d="M792.9 335.8L791.9 340.7" stroke="#1a1a1a" stroke-width="1"/><path d="M857.1 346.6L859.0 351.2" stroke="#1a1a1a" stroke-width="1"/><path d="M945.0 296.4L947.7 300.6" stroke="#1a1a1a" stroke-width="1"/><path d="M626.2 528.5L629.3 524.6" stroke="#1a1a1a" stroke-width="1"/><path d="M575.2 486.4L578.4 482.6" stroke="#1a1a1a" stroke-width="1"/><path d="M520.9 410.9L525.9 410.4" stroke="#1a1a1a" stroke-width="1"/><path d="M521.1 344.1L526.0 345.1" stroke="#1a1a1a" stroke-width="1"/><path d="M554.9 292.0L554.2 297.0" stroke="#1a1a1a" stroke-width="1"/><path d="M650.0 308.6L648.2 313.3" stroke="#1a1a1a" stroke-width="1"/><path d="M711.6 332.5L709.8 337.2" stroke="#1a1a1a" stroke-width="1"/><path d="M774.2 342.1L773.2 347.0" stroke="#1a1a1a" stroke-width="1"/><path d="M838.5 347.9L836.7 352.5" stroke="#1a1a1a" stroke-width="1"/><path d="M921.3 323.6L923.9 327.8" stroke="#1a1a1a" stroke-width="1"/><path d="M633.4 525.2L636.5 521.3" stroke="#1a1a1a" stroke-width="1"/><path d="M583.2 480.5L586.7 477.0" stroke="#1a1a1a" stroke-width="1"/><path d="M535.1 398.7L540.1 398.7" stroke="#1a1a1a" stroke-width="1"/><path d="M535.1 331.7L540.1 331.7" stroke="#1a1a1a" stroke-width="1"/><path d="M594.2 309.4L593.9 314.4" stroke="#1a1a1a" stroke-width="1"/><path d="M688.9 332.5L687.2 337.2" stroke="#1a1a1a" stroke-width="1"/><path d="M752.5 346.9L750.3 351.3" stroke="#1a1a1a" stroke-width="1"/><path d="M815.5 350.5L816.7 355.4" stroke="#1a1a1a" stroke-width="1"/><path d="M878.7 359.4L880.3 364.1" stroke="#1a1a1a" stroke-width="1"/><path d="M628.3 509.7L631.9 506.2" stroke="#1a1a1a" stroke-width="1"/><path d="M588.8 453.8L593.7 452.5" stroke="#1a1a1a" stroke-width="1"/><path d="M575.4 387.1L580.4 387.4" stroke="#1a1a1a" stroke-width="1"/><path d="M641.0 328.1L639.6 332.9" stroke="#1a1a1a" stroke-width="1"/><path d="M706.0 347.8L704.4 352.6" stroke="#1a1a1a" stroke-width="1"/><path d="M770.4 359.3L769.5 364.2" stroke="#1a1a1a" stroke-width="1"/><path d="M866.7 370.6L865.5 375.4" stroke="#1a1a1a" stroke-width="1"/><path d="M632.6 495.7L637.2 493.7" stroke="#1a1a1a" stroke-width="1"/><path d="M619.0 426.4L624.0 426.3" stroke="#1a1a1a" stroke-width="1"/><path d="M649.0 361.8L650.7 366.4" stroke="#1a1a1a" stroke-width="1"/><path d="M750.5 362.0L748.6 366.6" stroke="#1a1a1a" stroke-width="1"/><path d="M817.7 367.4L818.6 372.3" stroke="#1a1a1a" stroke-width="1"/><path d="M548.3 495.5L545.4 499.6" stroke="#1a1a1a" stroke-width="1"/><path d="M569.1 519.5L566.1 523.5" stroke="#1a1a1a" stroke-width="1"/><path d="M549.9 514.2L547.0 518.3" stroke="#1a1a1a" stroke-width="1"/><path d="M531.4 509.3L528.5 513.4" stroke="#1a1a1a" stroke-width="1"/></g>
<path d="M656.7 532.5C655.0 528.4 648.6 517.5 646.3 508.0C644.0 498.5 642.8 485.3 642.8 475.7C642.8 466.1 643.4 459.9 646.3 450.3C649.2 440.7 654.8 426.4 660.2 417.9C665.6 409.4 671.4 405.4 678.7 399.4C686.0 393.4 694.2 386.8 704.2 382.0C714.2 377.2 729.3 372.9 738.9 370.4C748.5 367.9 753.5 367.4 762.0 367.0C770.5 366.6 780.1 366.8 789.8 368.1C799.5 369.4 812.1 372.3 820.0 375.0C827.9 377.7 834.4 382.8 837.3 384.3Z" fill="url(#dots)" stroke="#123d0c" stroke-width="0.8"/>
<polyline points="690.0,392.0 742.0,387.0 803.0,394.0 838.0,399.0" fill="none" stroke="#206a18" stroke-width="0.5"/><polyline points="660.0,418.0 668.0,470.0 681.0,528.6" fill="none" stroke="#206a18" stroke-width="0.5"/>
<polygon points="1009.8,250.4 992.0,271.0 948.3,306.7 885.8,350.4 853.5,380.0 802.5,423.0 740.0,475.8 692.8,520.0 677.2,534.0 656.4,540.8 620.0,549.5 602.6,556.5 613.0,565.0 646.0,573.0 679.0,572.0 701.5,563.4 727.5,544.3 751.8,520.0 823.3,459.0 865.0,428.0 898.3,396.7 917.0,369.0 948.0,344.0 989.0,308.8 1016.0,259.8" fill="#259800" stroke="#1c5a14" stroke-width="0.6"/>
<polyline points="615.0,555.2 652.0,554.0 681.0,548.3 704.0,534.4 727.0,516.0 760.0,482.0 857.0,394.0 954.0,319.0 1004.0,267.0" fill="none" stroke="#174d10" stroke-width="0.6"/>
<polyline points="631.0,564.5 655.6,563.3 681.0,558.7 704.0,547.0 727.0,528.6 768.0,490.0 871.0,406.0 968.0,331.0 1010.0,272.0" fill="none" stroke="#174d10" stroke-width="0.6"/>
<g><path d="M623.3 549.8L628.3 555.8" stroke="#0a2a08" stroke-width="1.1"/><path d="M628.3 555.8L630.3 557.8" stroke="#1b4a14" stroke-width="0.5"/><path d="M645.8 549.1L650.8 555.1" stroke="#0a2a08" stroke-width="1.1"/><path d="M650.8 555.1L652.8 557.1" stroke="#1b4a14" stroke-width="0.5"/><path d="M668.0 545.3L673.0 551.3" stroke="#0a2a08" stroke-width="1.1"/><path d="M673.0 551.3L675.0 553.3" stroke="#1b4a14" stroke-width="0.5"/><path d="M688.6 536.9L693.6 542.9" stroke="#0a2a08" stroke-width="1.1"/><path d="M693.6 542.9L695.6 544.9" stroke="#1b4a14" stroke-width="0.5"/><path d="M707.3 524.4L712.3 530.4" stroke="#0a2a08" stroke-width="1.1"/><path d="M712.3 530.4L714.3 532.4" stroke="#1b4a14" stroke-width="0.5"/><path d="M724.8 510.2L729.8 516.2" stroke="#0a2a08" stroke-width="1.1"/><path d="M729.8 516.2L731.8 518.2" stroke="#1b4a14" stroke-width="0.5"/><path d="M740.5 494.0L745.5 500.0" stroke="#0a2a08" stroke-width="1.1"/><path d="M745.5 500.0L747.5 502.0" stroke="#1b4a14" stroke-width="0.5"/><path d="M756.2 477.9L761.2 483.9" stroke="#0a2a08" stroke-width="1.1"/><path d="M761.2 483.9L763.2 485.9" stroke="#1b4a14" stroke-width="0.5"/><path d="M772.8 462.7L777.8 468.7" stroke="#0a2a08" stroke-width="1.1"/><path d="M777.8 468.7L779.8 470.7" stroke="#1b4a14" stroke-width="0.5"/><path d="M789.5 447.5L794.5 453.5" stroke="#0a2a08" stroke-width="1.1"/><path d="M794.5 453.5L796.5 455.5" stroke="#1b4a14" stroke-width="0.5"/><path d="M806.2 432.4L811.2 438.4" stroke="#0a2a08" stroke-width="1.1"/><path d="M811.2 438.4L813.2 440.4" stroke="#1b4a14" stroke-width="0.5"/><path d="M822.9 417.2L827.9 423.2" stroke="#0a2a08" stroke-width="1.1"/><path d="M827.9 423.2L829.9 425.2" stroke="#1b4a14" stroke-width="0.5"/><path d="M839.6 402.1L844.6 408.1" stroke="#0a2a08" stroke-width="1.1"/><path d="M844.6 408.1L846.6 410.1" stroke="#1b4a14" stroke-width="0.5"/><path d="M856.5 387.1L861.5 393.1" stroke="#0a2a08" stroke-width="1.1"/><path d="M861.5 393.1L863.5 395.1" stroke="#1b4a14" stroke-width="0.5"/><path d="M874.3 373.3L879.3 379.3" stroke="#0a2a08" stroke-width="1.1"/><path d="M879.3 379.3L881.3 381.3" stroke="#1b4a14" stroke-width="0.5"/><path d="M892.1 359.5L897.1 365.5" stroke="#0a2a08" stroke-width="1.1"/><path d="M897.1 365.5L899.1 367.5" stroke="#1b4a14" stroke-width="0.5"/><path d="M910.0 345.7L915.0 351.7" stroke="#0a2a08" stroke-width="1.1"/><path d="M915.0 351.7L917.0 353.7" stroke="#1b4a14" stroke-width="0.5"/><path d="M927.8 331.9L932.8 337.9" stroke="#0a2a08" stroke-width="1.1"/><path d="M932.8 337.9L934.8 339.9" stroke="#1b4a14" stroke-width="0.5"/><path d="M945.6 318.1L950.6 324.1" stroke="#0a2a08" stroke-width="1.1"/><path d="M950.6 324.1L952.6 326.1" stroke="#1b4a14" stroke-width="0.5"/><path d="M961.9 302.6L966.9 308.6" stroke="#0a2a08" stroke-width="1.1"/><path d="M966.9 308.6L968.9 310.6" stroke="#1b4a14" stroke-width="0.5"/><path d="M977.6 286.4L982.6 292.4" stroke="#0a2a08" stroke-width="1.1"/><path d="M982.6 292.4L984.6 294.4" stroke="#1b4a14" stroke-width="0.5"/><path d="M993.2 270.1L998.2 276.1" stroke="#0a2a08" stroke-width="1.1"/><path d="M998.2 276.1L1000.2 278.1" stroke="#1b4a14" stroke-width="0.5"/><path d="M648.0 558.5L653.0 564.5" stroke="#0a2a08" stroke-width="1.1"/><path d="M653.0 564.5L655.0 566.5" stroke="#1b4a14" stroke-width="0.5"/><path d="M670.0 555.1L675.0 561.1" stroke="#0a2a08" stroke-width="1.1"/><path d="M675.0 561.1L677.0 563.1" stroke="#1b4a14" stroke-width="0.5"/><path d="M690.6 547.3L695.6 553.3" stroke="#0a2a08" stroke-width="1.1"/><path d="M695.6 553.3L697.6 555.3" stroke="#1b4a14" stroke-width="0.5"/><path d="M709.3 535.4L714.3 541.4" stroke="#0a2a08" stroke-width="1.1"/><path d="M714.3 541.4L716.3 543.4" stroke="#1b4a14" stroke-width="0.5"/><path d="M726.5 521.3L731.5 527.3" stroke="#0a2a08" stroke-width="1.1"/><path d="M731.5 527.3L733.5 529.3" stroke="#1b4a14" stroke-width="0.5"/><path d="M742.7 506.0L747.7 512.0" stroke="#0a2a08" stroke-width="1.1"/><path d="M747.7 512.0L749.7 514.0" stroke="#1b4a14" stroke-width="0.5"/><path d="M758.9 490.7L763.9 496.7" stroke="#0a2a08" stroke-width="1.1"/><path d="M763.9 496.7L765.9 498.7" stroke="#1b4a14" stroke-width="0.5"/><path d="M775.8 476.2L780.8 482.2" stroke="#0a2a08" stroke-width="1.1"/><path d="M780.8 482.2L782.8 484.2" stroke="#1b4a14" stroke-width="0.5"/><path d="M793.1 462.1L798.1 468.1" stroke="#0a2a08" stroke-width="1.1"/><path d="M798.1 468.1L800.1 470.1" stroke="#1b4a14" stroke-width="0.5"/><path d="M810.3 448.0L815.3 454.0" stroke="#0a2a08" stroke-width="1.1"/><path d="M815.3 454.0L817.3 456.0" stroke="#1b4a14" stroke-width="0.5"/><path d="M827.6 434.0L832.6 440.0" stroke="#0a2a08" stroke-width="1.1"/><path d="M832.6 440.0L834.6 442.0" stroke="#1b4a14" stroke-width="0.5"/><path d="M844.8 419.9L849.8 425.9" stroke="#0a2a08" stroke-width="1.1"/><path d="M849.8 425.9L851.8 427.9" stroke="#1b4a14" stroke-width="0.5"/><path d="M862.1 405.8L867.1 411.8" stroke="#0a2a08" stroke-width="1.1"/><path d="M867.1 411.8L869.1 413.8" stroke="#1b4a14" stroke-width="0.5"/><path d="M879.6 392.0L884.6 398.0" stroke="#0a2a08" stroke-width="1.1"/><path d="M884.6 398.0L886.6 400.0" stroke="#1b4a14" stroke-width="0.5"/><path d="M897.2 378.4L902.2 384.4" stroke="#0a2a08" stroke-width="1.1"/><path d="M902.2 384.4L904.2 386.4" stroke="#1b4a14" stroke-width="0.5"/><path d="M914.8 364.8L919.8 370.8" stroke="#0a2a08" stroke-width="1.1"/><path d="M919.8 370.8L921.8 372.8" stroke="#1b4a14" stroke-width="0.5"/><path d="M932.4 351.2L937.4 357.2" stroke="#0a2a08" stroke-width="1.1"/><path d="M937.4 357.2L939.4 359.2" stroke="#1b4a14" stroke-width="0.5"/><path d="M950.1 337.6L955.1 343.6" stroke="#0a2a08" stroke-width="1.1"/><path d="M955.1 343.6L957.1 345.6" stroke="#1b4a14" stroke-width="0.5"/><path d="M967.0 323.2L972.0 329.2" stroke="#0a2a08" stroke-width="1.1"/><path d="M972.0 329.2L974.0 331.2" stroke="#1b4a14" stroke-width="0.5"/><path d="M979.9 305.1L984.9 311.1" stroke="#0a2a08" stroke-width="1.1"/><path d="M984.9 311.1L986.9 313.1" stroke="#1b4a14" stroke-width="0.5"/><path d="M992.8 287.0L997.8 293.0" stroke="#0a2a08" stroke-width="1.1"/><path d="M997.8 293.0L999.8 295.0" stroke="#1b4a14" stroke-width="0.5"/><path d="M1005.7 268.8L1010.7 274.8" stroke="#0a2a08" stroke-width="1.1"/><path d="M1010.7 274.8L1012.7 276.8" stroke="#1b4a14" stroke-width="0.5"/></g>
<polygon points="929.6,300.4 949.4,306.7 969.2,335.8 990.0,370.2 952.5,342.0 931.7,321.2" fill="#259800" stroke="#1c5a14" stroke-width="0.5"/>
<polygon points="927,303 932,298 993,368 988,373" fill="#8c8c8c" stroke="#666" stroke-width="0.5"/>
<polygon points="615.6,555.6 627.7,554.7 624.3,658.9 606.0,643.2 613.0,572.0" fill="#b3d816" stroke="#5a7a10" stroke-width="0.6"/>
<polyline points="621,556 618,600 614,650" fill="none" stroke="#6a8a10" stroke-width="0.5"/>
<polyline points="625,556 623,600 620,655" fill="none" stroke="#6a8a10" stroke-width="0.5"/>
<path d="M610.9 562h3M622.0 565h3" stroke="#222" stroke-width="0.9"/>
<path d="M610.5 570h3M622.0 573h3" stroke="#222" stroke-width="0.9"/>
<path d="M610.1 578h3M622.0 581h3" stroke="#222" stroke-width="0.9"/>
<path d="M609.7 586h3M622.0 589h3" stroke="#222" stroke-width="0.9"/>
<path d="M609.3 594h3M622.0 597h3" stroke="#222" stroke-width="0.9"/>
<path d="M608.9 602h3M622.0 605h3" stroke="#222" stroke-width="0.9"/>
<path d="M608.5 610h3M622.0 613h3" stroke="#222" stroke-width="0.9"/>
<path d="M608.1 618h3M622.0 621h3" stroke="#222" stroke-width="0.9"/>
<path d="M607.7 626h3M622.0 629h3" stroke="#222" stroke-width="0.9"/>
<path d="M607.3 634h3M622.0 637h3" stroke="#222" stroke-width="0.9"/>
<path d="M606.9 642h3M622.0 645h3" stroke="#222" stroke-width="0.9"/>
<path d="M606.5 650h3M622.0 653h3" stroke="#222" stroke-width="0.9"/>
<path d="M846 318 Q860 332 877 330.6 Q905 330 926.7 316.7 Q952 300 960 283.3 Q966 268 965.6 252.8" fill="none" stroke="#333" stroke-width="0.9"/>
<path d="M965.6 252.8 L960 245" stroke="#333" stroke-width="0.6"/>
<path d="M857 327.8 Q875 350 899 355.6 Q925 358 940.6 352.8 Q955 345 960 333 Q975 305 979.4 283.3 Q981 265 976.7 258.3 Q973 254 968 257 Q965 262 968 261 Q972 280 974 291.7 Q965 325 949 341.7 Q925 350 904 347 Q880 343 862.8 333.3" fill="none" stroke="#e8904a" stroke-width="0.6" stroke-dasharray="1.5 0.8"/>
<path d="M862 330 Q890 345 920 344 Q955 335 968 300 Q972 280 970 262" fill="none" stroke="#d8d8d8" stroke-width="0.6" stroke-dasharray="2 1"/>
<circle cx="853" cy="322" r="4.5" fill="none" stroke="#e86a6a" stroke-width="0.6"/>
<path d="M966 262 a5 6 0 1 1 12 0" fill="none" stroke="#e86a6a" stroke-width="0.6"/>
<g><text x="811" y="211" font-family="Liberation Sans" font-size="13.5" fill="#b8b8b8" font-weight="400" text-anchor="start">Play Area</text><text x="407.5" y="499" font-family="Liberation Sans" font-size="10" fill="#c0c0c0" font-weight="400" text-anchor="start">Car Park</text><text x="512" y="553" font-family="Liberation Sans" font-size="9" fill="#aaa" font-weight="400" text-anchor="start" transform="rotate(25 512 553)">CHANGING</text><text x="514" y="565" font-family="Liberation Sans" font-size="9" fill="#aaa" font-weight="400" text-anchor="start" transform="rotate(25 514 565)">ROOMS</text><text x="829" y="660" font-family="Liberation Sans" font-size="10" fill="#b0b0b0" font-weight="400" text-anchor="start" transform="rotate(-40 829 660)">GEORGES CLOSE</text><text x="540" y="688" font-family="Liberation Sans" font-size="9" fill="#aaa" font-weight="400" text-anchor="start" transform="rotate(57 540 688)">NORTHBROOK</text><text x="787" y="617" font-family="Liberation Sans" font-size="10" fill="#aaa" font-weight="400" text-anchor="middle" transform="rotate(-40 787 617)">13</text><text x="711" y="681" font-family="Liberation Sans" font-size="10" fill="#aaa" font-weight="400" text-anchor="middle" transform="rotate(-40 711 681)">16</text><text x="923" y="668" font-family="Liberation Sans" font-size="10" fill="#aaa" font-weight="400" text-anchor="middle" transform="rotate(140 923 668)">3</text><text x="873" y="706" font-family="Liberation Sans" font-size="10" fill="#aaa" font-weight="400" text-anchor="middle" transform="rotate(140 873 706)">1</text><text x="1038" y="620" font-family="Liberation Sans" font-size="10" fill="#aaa" font-weight="400" text-anchor="middle" transform="rotate(-140 1038 620)">9</text><text x="963" y="476" font-family="Liberation Sans" font-size="10" fill="#aaa" font-weight="400" text-anchor="middle" transform="rotate(20 963 476)">7</text><text x="890" y="540" font-family="Liberation Sans" font-size="10" fill="#aaa" font-weight="400" text-anchor="middle" transform="rotate(-40 890 540)">10</text><text x="433" y="385.0" font-family="Liberation Sans" font-size="4.6" fill="#111" font-weight="400" text-anchor="start">Proposed earthworks</text><text x="433" y="390.29" font-family="Liberation Sans" font-size="4.6" fill="#111" font-weight="400" text-anchor="start">Surface to be grass seeded</text><rect x="583" y="394" width="80" height="12" fill="#fff"/><text x="585" y="399.0" font-family="Liberation Sans" font-size="4.6" fill="#111" font-weight="400" text-anchor="start">Proposed drainage blanket and filter drains</text><text x="585" y="404.29" font-family="Liberation Sans" font-size="4.6" fill="#111" font-weight="400" text-anchor="start">Surface to be grass seeded</text><rect x="626" y="455" width="78" height="6" fill="#fff"/><text x="628" y="459.5" font-family="Liberation Sans" font-size="4.6" fill="#111" font-weight="400" text-anchor="start">Proposed outlet chamber with solid cover</text><text x="845" y="216.5" font-family="Liberation Sans" font-size="4.6" fill="#111" font-weight="400" text-anchor="start">Existing play area fence to be relocated</text><text x="796" y="279.5" font-family="Liberation Sans" font-size="4.6" fill="#111" font-weight="400" text-anchor="start">Proposed location of play area fence</text><text x="857" y="471.0" font-family="Liberation Sans" font-size="4.6" fill="#111" font-weight="400" text-anchor="start">Proposed earth bund</text><text x="857" y="476.29" font-family="Liberation Sans" font-size="4.6" fill="#111" font-weight="400" text-anchor="start">Surface to be reinforced turf</text><text x="857" y="481.58" font-family="Liberation Sans" font-size="4.6" fill="#111" font-weight="400" text-anchor="start">Refer to note 3 for details</text><text x="790" y="533.5" font-family="Liberation Sans" font-size="4.6" fill="#111" font-weight="400" text-anchor="start">Proposed new chamber with solid cover</text><text x="481" y="603.0" font-family="Liberation Sans" font-size="4.6" fill="#111" font-weight="400" text-anchor="start">Proposed spillway</text><text x="481" y="608.29" font-family="Liberation Sans" font-size="4.6" fill="#111" font-weight="400" text-anchor="start">Surface to be reinforced turf</text><text x="481" y="613.58" font-family="Liberation Sans" font-size="4.6" fill="#111" font-weight="400" text-anchor="start">Refer to note 3 for details</text><text x="1020" y="370.5" font-family="Liberation Sans" font-size="4.6" fill="#111" font-weight="400" text-anchor="start">Current access to the play area to be</text><text x="1020" y="375.79" font-family="Liberation Sans" font-size="4.6" fill="#111" font-weight="400" text-anchor="start">retained via ramps with slopes of 1 in 20</text><text x="1020" y="381.08" font-family="Liberation Sans" font-size="4.6" fill="#111" font-weight="400" text-anchor="start">Tarmac track to be reinstated on top of the</text><text x="1020" y="386.37" font-family="Liberation Sans" font-size="4.6" fill="#111" font-weight="400" text-anchor="start">embankment and along these ramps</text></g>
<g><line x1="482" y1="386" x2="545" y2="410" stroke="#333" stroke-width="0.5"/><line x1="663" y1="402" x2="712" y2="415" stroke="#333" stroke-width="0.5"/><line x1="704" y1="458" x2="745" y2="453.7" stroke="#333" stroke-width="0.5"/><line x1="917" y1="216" x2="969" y2="253" stroke="#333" stroke-width="0.5"/><line x1="866" y1="281" x2="913" y2="317" stroke="#333" stroke-width="0.5"/><line x1="813" y1="282" x2="846" y2="319" stroke="#333" stroke-width="0.5"/><line x1="852" y1="469" x2="823" y2="459" stroke="#333" stroke-width="0.5"/><line x1="790" y1="535" x2="738" y2="556" stroke="#333" stroke-width="0.5"/><line x1="545" y1="606" x2="605" y2="625" stroke="#333" stroke-width="0.5"/><line x1="1018" y1="372" x2="985" y2="357" stroke="#333" stroke-width="0.5"/><circle cx="745" cy="453.5" r="1.5" fill="#555"/><circle cx="738" cy="556" r="1.5" fill="#555"/></g>
<rect x="331" y="152.5" width="920.5" height="644.5" fill="none" stroke="#222" stroke-width="1.3"/>
<rect x="331" y="152.5" width="138.3" height="16" fill="#fff" stroke="#222" stroke-width="1.2"/>
<text x="333" y="157" font-family="Liberation Sans" font-size="3.2" fill="#333">Drawing number / Rev</text>
<text x="337.5" y="165.6" font-family="Liberation Sans" font-size="7.8" fill="#111" textLength="120.5" lengthAdjust="spacingAndGlyphs">B2300390-EXE-PH2-DR-220/P02</text>
<rect x="331" y="785" width="106" height="12" fill="#fff" stroke="#222" stroke-width="1"/>
<text x="333" y="789.8" font-family="Liberation Sans" font-size="3.8" font-weight="700" fill="#111" textLength="58" lengthAdjust="spacingAndGlyphs">Contains Ordnance Survey data.</text>
<text x="333" y="794.6" font-family="Liberation Sans" font-size="3.8" font-weight="700" fill="#111" textLength="101" lengthAdjust="spacingAndGlyphs">© Crown copyright and database rights 2019. 100019783</text>
<g stroke="#555" fill="none" stroke-width="0.6"><circle cx="1090.6" cy="186.3" r="9"/></g>
<path d="M1090.6 159 L1093.5 182 L1095.8 195.8 L1085.5 195.8 L1087.7 182 Z" fill="#fff" stroke="#555" stroke-width="0.6"/>
<path d="M1077.5 185.4h8.8M1094.8 185.4h8.8M1090.6 195.8v7.8" stroke="#555" stroke-width="1.2"/>
<text x="1090.6" y="191.5" font-size="6" text-anchor="middle" font-family="Liberation Sans" fill="#777">N</text>
<path d="M1007.4 775v-4h23v3h23v-3h24v3h23v-4" fill="none" stroke="#111" stroke-width="1.6"/>
<text x="1007" y="768" font-size="4" text-anchor="middle" font-family="Liberation Mono" fill="#555">0</text>
<text x="1030.5" y="768" font-size="4" text-anchor="middle" font-family="Liberation Mono" fill="#555">5</text>
<text x="1053.5" y="768" font-size="4" text-anchor="middle" font-family="Liberation Mono" fill="#555">10</text>
<text x="1077" y="768" font-size="4" text-anchor="middle" font-family="Liberation Mono" fill="#555">15</text>
<text x="1100" y="768" font-size="4" text-anchor="middle" font-family="Liberation Mono" fill="#555">20</text>
<text x="1008" y="780" font-size="4" font-family="Liberation Mono" fill="#555">SCALE 1:250 (A1)</text><text x="1008" y="785" font-size="4" font-family="Liberation Mono" fill="#555">SCALE 1:500 (A3)</text><text x="1083" y="781" font-size="4" font-family="Liberation Sans" fill="#222">METRES</text>
<g><rect x="1113.3" y="152.5" width="138.2" height="644.5" fill="#fff" stroke="#222" stroke-width="1.2"/><line x1="1113.3" y1="171.4" x2="1251.5" y2="171.4" stroke="#333" stroke-width="1"/><text x="1180.5" y="165.3" font-family="Liberation Sans" font-size="8.6" font-weight="400" fill="#222" text-anchor="middle" textLength="64" lengthAdjust="spacingAndGlyphs">LOCATION PLAN</text><rect x="1114" y="172" width="137" height="138" fill="#d6d6d6"/><rect x="1114" y="172" width="137" height="138" filter="url(#noise)" opacity="0.9"/><rect x="1114" y="172" width="137" height="138" filter="url(#blob)" opacity="0.55"/><g stroke="#f4f4f4" fill="#f0f0f0" stroke-width="1.5"><path d="M1114 224 Q1180 210 1251 185" fill="none" stroke-width="2.5"/><polygon points="1146,217 1160,212 1164,222 1150,227"/><polygon points="1133,221 1146,217 1148,225 1135,229" /><polygon points="1163,196 1175,190 1180,198 1168,204"/><polygon points="1123,252 1136,258 1148,278 1132,270"/><polygon points="1230,208 1251,202 1251,236 1232,240"/><polygon points="1180,300 1200,288 1210,300 1190,308"/></g><g stroke="#222" stroke-width="1.3" stroke-dasharray="1.6 0.7"><path d="M1166 212l4 18M1166 239l16-7M1122 253l11 16M1144 261l11 5M1152 287l12-14M1214 270l13-20M1168 193l11-5"/></g><rect x="1135.3" y="264.9" width="30.7" height="22.6" fill="none" stroke="#e0507a" stroke-width="0.8"/><g stroke="#333" stroke-width="0.6" fill="none"><path d="M1242 179v9M1238 183.5h8"/></g><line x1="1113.3" y1="310" x2="1251.5" y2="310" stroke="#333" stroke-width="1"/><text x="1116" y="319" font-size="4" font-family="Liberation Sans" font-weight="700" fill="#111" text-decoration="underline">NOTES:</text><text x="1118" y="327.0" font-size="3.9" font-family="Liberation Sans" fill="#111">1.</text><text x="1127" y="327.0" font-size="3.9" font-family="Liberation Sans" font-weight="700" fill="#111" textLength="118" lengthAdjust="spacingAndGlyphs">All levels are shown in metres above ordnance datum (mAOD).</text><text x="1118" y="332.3" font-size="3.9" font-family="Liberation Sans" fill="#111">2.</text><text x="1127" y="332.3" font-size="3.9" font-family="Liberation Sans" font-weight="700" fill="#111" textLength="118" lengthAdjust="spacingAndGlyphs">Proposed works area to be fenced to allow for grass to establish.</text><text x="1118" y="337.6" font-size="3.9" font-family="Liberation Sans" fill="#111">3.</text><text x="1127" y="337.6" font-size="3.9" font-family="Liberation Sans" font-weight="700" fill="#111" textLength="118" lengthAdjust="spacingAndGlyphs">The proposed bund and spillway are proposed to be surfaced with</text><text x="1127" y="342.9" font-size="3.9" font-family="Liberation Sans" font-weight="700" fill="#111" textLength="118" lengthAdjust="spacingAndGlyphs">turf reinforcement mats for erosion control purposes. This will be</text><text x="1127" y="348.2" font-size="3.9" font-family="Liberation Sans" font-weight="700" fill="#111">developed during detailed design.</text><text x="1117" y="358" font-size="4" font-family="Liberation Sans" font-weight="700" fill="#111" text-decoration="underline">KEY:</text><rect x="1117" y="363.0" width="27" height="5.5" fill="#259800" stroke="#222" stroke-width="0.6"/><text x="1148" y="367.3" font-size="4" font-family="Liberation Sans" font-weight="700" fill="#111">Proposed earth bund</text><rect x="1117" y="372.8" width="27" height="5.5" fill="#b3d816" stroke="#222" stroke-width="0.6"/><text x="1148" y="377.1" font-size="4" font-family="Liberation Sans" font-weight="700" fill="#111">Proposed exceedance spillway</text><rect x="1117" y="382.6" width="27" height="5.5" fill="#d7ecbb" stroke="#222" stroke-width="0.6"/><text x="1148" y="386.90000000000003" font-size="4" font-family="Liberation Sans" font-weight="700" fill="#111">Proposed earthworks</text><rect x="1117" y="392.4" width="27" height="5.5" fill="#2cb512" stroke="#222" stroke-width="0.6"/><text x="1148" y="396.7" font-size="4" font-family="Liberation Sans" font-weight="700" fill="#111">Proposed filter drain</text><text x="1148" y="407" font-size="4" font-family="Liberation Sans" fill="#111">Existing level</text><text x="1125" y="404" font-size="3" font-family="Liberation Sans" fill="#777">+ 24.7</text><text x="1148" y="416.5" font-size="4" font-family="Liberation Sans" fill="#111">Proposed level</text><text x="1125" y="414" font-size="3" font-family="Liberation Sans" fill="#333">+ 24.7</text><path d="M1117 424.5h27" stroke="#333" stroke-width="0.6"/><rect x="1129" y="423" width="4" height="3" fill="#fff" stroke="#333" stroke-width="0.5"/><text x="1148" y="426" font-size="4" font-family="Liberation Sans" fill="#111">Existing play area fence to be relocated</text><line x1="1113.3" y1="514.5" x2="1251.5" y2="514.5" stroke="#111" stroke-width="0.9"/><line x1="1113.3" y1="521.4" x2="1251.5" y2="521.4" stroke="#111" stroke-width="0.9"/><line x1="1113.3" y1="527.4" x2="1251.5" y2="527.4" stroke="#111" stroke-width="0.9"/><line x1="1113.3" y1="534.5" x2="1251.5" y2="534.5" stroke="#111" stroke-width="0.9"/><line x1="1113.3" y1="541.1" x2="1251.5" y2="541.1" stroke="#111" stroke-width="0.9"/><line x1="1113.3" y1="547.5" x2="1251.5" y2="547.5" stroke="#111" stroke-width="0.9"/><line x1="1113.3" y1="553.8" x2="1251.5" y2="553.8" stroke="#111" stroke-width="0.9"/><line x1="1113.3" y1="560.4" x2="1251.5" y2="560.4" stroke="#111" stroke-width="0.9"/><line x1="1113.3" y1="566.9" x2="1251.5" y2="566.9" stroke="#111" stroke-width="0.9"/><line x1="1113.3" y1="573.2" x2="1251.5" y2="573.2" stroke="#111" stroke-width="0.9"/><line x1="1113.3" y1="579.6" x2="1251.5" y2="579.6" stroke="#111" stroke-width="0.9"/><line x1="1113.3" y1="586.2" x2="1251.5" y2="586.2" stroke="#111" stroke-width="0.9"/><line x1="1125.6" y1="514.5" x2="1125.6" y2="586.2" stroke="#111" stroke-width="0.9"/><line x1="1145.5" y1="514.5" x2="1145.5" y2="586.2" stroke="#111" stroke-width="0.9"/><line x1="1205.5" y1="514.5" x2="1205.5" y2="586.2" stroke="#111" stroke-width="0.9"/><line x1="1217.3" y1="514.5" x2="1217.3" y2="586.2" stroke="#111" stroke-width="0.9"/><line x1="1228.6" y1="514.5" x2="1228.6" y2="586.2" stroke="#111" stroke-width="0.9"/><line x1="1239.6" y1="514.5" x2="1239.6" y2="586.2" stroke="#111" stroke-width="0.9"/><text x="1119.7" y="571.8" font-size="3" font-family="Liberation Sans" font-weight="700" fill="#222" text-anchor="middle">P02</text><text x="1135.5" y="571.8" font-size="3" font-family="Liberation Sans" font-weight="700" fill="#222" text-anchor="middle">12/12/2019</text><text x="1175.5" y="571.8" font-size="3" font-family="Liberation Sans" font-weight="700" fill="#222" text-anchor="middle">1ST ISSUE FOR PLANNING APPLICATION</text><text x="1211.4" y="571.8" font-size="3" font-family="Liberation Sans" font-weight="700" fill="#222" text-anchor="middle">DRM</text><text x="1222.9" y="571.8" font-size="3" font-family="Liberation Sans" font-weight="700" fill="#222" text-anchor="middle">IR</text><text x="1234.1" y="571.8" font-size="3" font-family="Liberation Sans" font-weight="700" fill="#222" text-anchor="middle">JOB</text><text x="1245.5" y="571.8" font-size="3" font-family="Liberation Sans" font-weight="700" fill="#222" text-anchor="middle">AB</text><text x="1119.7" y="578.2" font-size="3" font-family="Liberation Sans" font-weight="700" fill="#222" text-anchor="middle">P01</text><text x="1135.5" y="578.2" font-size="3" font-family="Liberation Sans" font-weight="700" fill="#222" text-anchor="middle">08/10/2019</text><text x="1175.5" y="578.2" font-size="3" font-family="Liberation Sans" font-weight="700" fill="#222" text-anchor="middle">PRE-APPLICATION ADVICE</text><text x="1211.4" y="578.2" font-size="3" font-family="Liberation Sans" font-weight="700" fill="#222" text-anchor="middle">DRM</text><text x="1222.9" y="578.2" font-size="3" font-family="Liberation Sans" font-weight="700" fill="#222" text-anchor="middle">IR</text><text x="1234.1" y="578.2" font-size="3" font-family="Liberation Sans" font-weight="700" fill="#222" text-anchor="middle">JOB</text><text x="1245.5" y="578.2" font-size="3" font-family="Liberation Sans" font-weight="700" fill="#222" text-anchor="middle">AB</text><text x="1119.7" y="584.6" font-size="3" font-family="Liberation Sans" font-weight="700" fill="#222" text-anchor="middle">Rev</text><text x="1135.5" y="584.6" font-size="3" font-family="Liberation Sans" font-weight="700" fill="#222" text-anchor="middle">Rev. Date</text><text x="1175.5" y="584.6" font-size="3" font-family="Liberation Sans" font-weight="700" fill="#222" text-anchor="middle">Purpose of revision</text><text x="1211.4" y="584.6" font-size="3" font-family="Liberation Sans" font-weight="700" fill="#222" text-anchor="middle">Drawn</text><text x="1222.9" y="584.6" font-size="3" font-family="Liberation Sans" font-weight="700" fill="#222" text-anchor="middle">Checkd</text><text x="1234.1" y="584.6" font-size="3" font-family="Liberation Sans" font-weight="700" fill="#222" text-anchor="middle">Rev'd</text><text x="1245.5" y="584.6" font-size="3" font-family="Liberation Sans" font-weight="700" fill="#222" text-anchor="middle">Apprv'd</text><text x="1115" y="590.5" font-size="2.8" font-family="Liberation Sans" fill="#333">Client</text><text x="1155.5" y="612" font-size="16.5" font-family="Liberation Sans" fill="#111" stroke="#111" stroke-width="0.45" textLength="47.5" lengthAdjust="spacingAndGlyphs">Devon</text><text x="1156" y="621" font-size="7.2" font-family="Liberation Sans" font-weight="700" fill="#111" textLength="47" lengthAdjust="spacingAndGlyphs">County Council</text><path d="M1207 601 Q1226 604 1234 603 Q1228 620 1210 622 Q1206 612 1207 601z" fill="#b0b0b0"/><path d="M1224 595 Q1208 598 1206 612 Q1207 618 1207 623 Q1210 610 1214 604 Q1220 598 1224 595z" fill="#111"/><line x1="1113.3" y1="633" x2="1251.5" y2="633" stroke="#222" stroke-width="1"/><text x="1184.5" y="647.3" font-size="15" font-family="Liberation Sans" font-weight="700" fill="#111" text-anchor="middle" textLength="71" lengthAdjust="spacingAndGlyphs" stroke="#111" stroke-width="0.6">JACOBS</text><g stroke="#444" stroke-width="0.9" stroke-dasharray="2 0.7"><path d="M1144 650.3h73M1164 653.5h33M1164 656.8h34"/></g><line x1="1113.3" y1="662" x2="1251.5" y2="662" stroke="#222" stroke-width="1"/><text x="1115" y="666" font-size="2.8" font-family="Liberation Sans" fill="#333">Project</text><text x="1181.5" y="678.5" font-size="8" font-family="Liberation Sans" fill="#222" text-anchor="middle" textLength="62" lengthAdjust="spacingAndGlyphs">EXETER FLOOD</text><text x="1181.5" y="688.2" font-size="8" font-family="Liberation Sans" fill="#222" text-anchor="middle" textLength="125" lengthAdjust="spacingAndGlyphs">ALLEVIATION SCHEME PHASE 2</text><line x1="1113.3" y1="699.3" x2="1251.5" y2="699.3" stroke="#222" stroke-width="1"/><text x="1115" y="703" font-size="2.8" font-family="Liberation Sans" fill="#333">Drawing title</text><text x="1182.3" y="719.8" font-size="8" font-family="Liberation Sans" fill="#222" text-anchor="middle" textLength="79.5" lengthAdjust="spacingAndGlyphs">ST GEORGE'S FIELD</text><text x="1182.3" y="729.6" font-size="8" font-family="Liberation Sans" fill="#222" text-anchor="middle" textLength="72" lengthAdjust="spacingAndGlyphs">LANDSCAPE PLAN</text><line x1="1113.3" y1="741" x2="1251.5" y2="741" stroke="#222" stroke-width="1"/><text x="1115" y="744.3" font-size="2.8" font-family="Liberation Sans" fill="#333">Drawing status</text><text x="1126" y="751.2" font-size="8" font-family="Liberation Sans" fill="#222" textLength="111.4" lengthAdjust="spacingAndGlyphs">S4 - ISSUED FOR APPROVAL</text><line x1="1113.3" y1="753.8" x2="1251.5" y2="753.8" stroke="#222" stroke-width="1"/><line x1="1113.3" y1="759.3" x2="1251.5" y2="759.3" stroke="#222" stroke-width="0.8"/><line x1="1113.3" y1="765" x2="1251.5" y2="765" stroke="#222" stroke-width="0.8"/><line x1="1144.2" y1="753.8" x2="1144.2" y2="765" stroke="#222" stroke-width="0.8"/><line x1="1206" y1="753.8" x2="1206" y2="759.3" stroke="#222" stroke-width="0.8"/><text x="1115" y="758" font-size="3" font-family="Liberation Sans" fill="#333">Scale</text><text x="1115" y="763.5" font-size="3" font-family="Liberation Sans" fill="#333">Jacobs No.</text><text x="1146" y="758.3" font-size="3.6" font-family="Liberation Sans" fill="#333">1:250 @ A1, 1:500 @ A3</text><text x="1146" y="763.8" font-size="3.6" font-family="Liberation Sans" fill="#333">B2300390</text><text x="1210" y="758.3" font-size="4" font-family="Liberation Sans" fill="#666">DO NOT SCALE</text><line x1="1113.3" y1="781.3" x2="1251.5" y2="781.3" stroke="#222" stroke-width="1"/><line x1="1235.5" y1="765" x2="1235.5" y2="781.3" stroke="#222" stroke-width="0.8"/><text x="1115" y="769" font-size="2.8" font-family="Liberation Sans" fill="#333">Drawing number</text><text x="1242" y="769" font-size="2.8" font-family="Liberation Sans" fill="#333">Rev</text><text x="1119.6" y="778.6" font-size="8" font-family="Liberation Sans" fill="#222" textLength="103.8" lengthAdjust="spacingAndGlyphs">B2300390-EXE-PH2-DR-220</text><text x="1236" y="778.6" font-size="8" font-family="Liberation Sans" fill="#222" textLength="14.5" lengthAdjust="spacingAndGlyphs">P02</text><g stroke="#555" stroke-width="0.9" stroke-dasharray="3 0.6 5 0.8"><path d="M1115 783.8h134M1115 786.3h134M1115 788.8h134M1115 791.3h134M1115 793.8h100"/></g></g>
</svg>

<!--/DRAWING-->
<div class="a" style="left:1271px;top:125px;width:18px;height:699px;background:#f0f0f0;border-right:1px solid #d4d4d4"></div>
<svg style="left:1276px;top:131px" width="9" height="6" viewBox="0 0 9 6"><path d="M0.5 5.5L4.5 1.5l4 4" fill="none" stroke="#aaa" stroke-width="1.3"/></svg>
<svg style="left:1276px;top:815px" width="9" height="6" viewBox="0 0 9 6"><path d="M0.5 0.5L4.5 4.5l4-4" fill="none" stroke="#aaa" stroke-width="1.3"/></svg>
<div class="a" style="left:1289px;top:125px;width:17px;height:699px;background:#e8e8e8"></div>
<svg style="left:1293px;top:468px" width="7" height="11"><path d="M0 0v11L6.5 5.5z" fill="#666"/></svg>
<!-- right panel -->
<div class="a" style="left:1306px;top:125px;width:230px;height:699px;background:#fafafa"></div>
<div class="a" style="left:1321px;top:140px;width:201px;height:35px;background:#fff;border:1px solid #d4d4d4"></div>
<div class="t" style="left:1335px;top:152px;font-size:13.3px;color:#999">Search 'Add Link'</div>
<div class="a" style="left:1321px;top:190px;width:183px;height:40px;background:#f6f6f6"></div>
<div class="a" style="left:1321px;top:234px;width:183px;height:40px;background:#f6f6f6"></div>
<div class="a" style="left:1520px;top:190px;width:16px;height:535px;background:#f0f0f0"></div>
<div class="a" style="left:1520px;top:207px;width:16px;height:491px;background:#c6c6c6"></div>
<svg style="left:1523px;top:195px" width="9" height="6" viewBox="0 0 9 6"><path d="M0.5 5.5L4.5 1.5l4 4" fill="none" stroke="#555" stroke-width="1.3"/></svg>
<svg style="left:1523px;top:714px" width="9" height="6" viewBox="0 0 9 6"><path d="M0.5 0.5L4.5 4.5l4-4" fill="none" stroke="#555" stroke-width="1.3"/></svg>
<div class="a" style="left:1318px;top:726px;width:204px;height:1px;background:#d4d4d4"></div>
<svg style="left:1331px;top:199px" width="24" height="24" viewBox="0 0 24 24"><path d="M2 2h11l4 4v8h-6v6H2z" fill="#d6ecef"/><path d="M2 2h11l4 4v7" fill="none" stroke="#2c8a9e" stroke-width="1.8"/><path d="M2 2v18h9" fill="none" stroke="#2c8a9e" stroke-width="1.8"/><path d="M6 14c2-3 3-6 3-7s-1-1-1 0 1.5 4 3.5 5" fill="none" stroke="#2c8a9e" stroke-width="1.2"/><circle cx="17" cy="18" r="5.5" fill="#2c8a9e"/><path d="M14 18h5.5M17.5 15.5l2.5 2.5-2.5 2.5" fill="none" stroke="#fff" stroke-width="1.5"/></svg>
<div class="t" style="left:1365px;top:203px;font-size:15px;color:#4b4b4b">Export PDF</div>
<svg style="left:1484px;top:207px" width="13" height="8" viewBox="0 0 13 8"><path d="M1 1l5.5 5.5L12 1" fill="none" stroke="#444" stroke-width="2"/></svg>
<svg style="left:1331px;top:243px" width="24" height="24" viewBox="0 0 24 24"><path d="M2 2h11l4 4v8h-6v6H2z" fill="#f8dfe1"/><path d="M2 2h11l4 4v7" fill="none" stroke="#e0434a" stroke-width="1.8"/><path d="M2 2v18h9" fill="none" stroke="#e0434a" stroke-width="1.8"/><path d="M6 14c2-3 3-6 3-7s-1-1-1 0 1.5 4 3.5 5" fill="none" stroke="#e0434a" stroke-width="1.2"/><circle cx="17" cy="18" r="5.5" fill="#e0434a"/><path d="M14 18h6M17 15v6" fill="none" stroke="#fff" stroke-width="1.6"/></svg>
<div class="t" style="left:1365px;top:247px;font-size:15px;color:#4b4b4b">Create PDF</div>
<svg style="left:1484px;top:251px" width="13" height="8" viewBox="0 0 13 8"><path d="M1 1l5.5 5.5L12 1" fill="none" stroke="#444" stroke-width="2"/></svg>
<svg style="left:1331px;top:288px" width="24" height="24" viewBox="0 0 24 24"><rect x="2" y="2" width="20" height="8" fill="#f4c8de" stroke="#d9318c" stroke-width="1.8"/><rect x="2" y="13" width="9" height="8" fill="#f4c8de" stroke="#d9318c" stroke-width="1.8"/><path d="M14 14h8M14 17.5h8M14 21h8" stroke="#d9318c" stroke-width="1.5"/></svg>
<div class="t" style="left:1365px;top:292px;font-size:15px;color:#4b4b4b">Edit PDF</div>
<svg style="left:1331px;top:333px" width="24" height="24" viewBox="0 0 24 24"><path d="M2 2h19v14H11l-4.5 4.5V16H2z" fill="#e8b81a"/><path d="M6 7h11M6 11h8" stroke="#fff" stroke-width="1.4"/></svg>
<div class="t" style="left:1365px;top:337px;font-size:15px;color:#4b4b4b">Comment</div>
<svg style="left:1331px;top:379px" width="24" height="24" viewBox="0 0 24 24"><path d="M2 2h8l2 2v12H2z" fill="#fff" stroke="#5c5ce0" stroke-width="1.8"/><path d="M13 2h6l3 3v11h-9z" fill="#5c5ce0"/><path d="M5 11c1-2 2-4 2-5" fill="none" stroke="#5c5ce0" stroke-width="1.2"/><path d="M11 16v7M8 20l3 3 3-3" fill="none" stroke="#5c5ce0" stroke-width="1.8"/></svg>
<div class="t" style="left:1365px;top:383px;font-size:15px;color:#4b4b4b">Combine Files</div>
<svg style="left:1331px;top:424px" width="24" height="24" viewBox="0 0 24 24"><rect x="12" y="2" width="10" height="19" fill="#cfeebd" stroke="#6cbf3a" stroke-width="1.8"/><path d="M2 6v15h7M2 2h7" fill="none" stroke="#6cbf3a" stroke-width="1.8" stroke-dasharray="2 1.5"/><path d="M9 8H3M5 5.5L2.5 8 5 10.5" fill="none" stroke="#6cbf3a" stroke-width="1.4"/></svg>
<div class="t" style="left:1365px;top:428px;font-size:15px;color:#4b4b4b">Organize Pages</div>
<svg style="left:1331px;top:470px" width="24" height="24" viewBox="0 0 24 24"><path d="M7 17L18 6a2 2 0 0 0-3-3L4 14z" fill="#e0347a"/><path d="M2 21h20" stroke="#e0347a" stroke-width="3"/></svg>
<div class="t" style="left:1365px;top:474px;font-size:15px;color:#4b4b4b">Redact</div>
<svg style="left:1331px;top:515px" width="24" height="24" viewBox="0 0 24 24"><path d="M12 2l9 3v7c0 5.5-4 9-9 11-5-2-9-5.5-9-11V5z" fill="#d6dcf8" stroke="#5b6fe0" stroke-width="1.8"/></svg>
<div class="t" style="left:1365px;top:519px;font-size:15px;color:#4b4b4b">Protect</div>
<svg style="left:1331px;top:561px" width="24" height="24" viewBox="0 0 24 24"><path d="M3 2h12l4 4v14H3z" fill="#fff" stroke="#e0434a" stroke-width="1.8"/><path d="M7 15c2-3 3-6 3-7s-1-1-1 0 1.5 4 3.5 5" fill="none" stroke="#e0434a" stroke-width="1.2"/><path d="M3 23h16" stroke="#e0434a" stroke-width="1" stroke-dasharray="2 1"/></svg>
<div class="t" style="left:1365px;top:565px;font-size:15px;color:#4b4b4b">Optimize PDF</div>
<svg style="left:1331px;top:607px" width="24" height="24" viewBox="0 0 24 24"><path d="M6 17L17 4a2 2 0 0 1 3 3L9 19l-4 1z" fill="#e6d6f8" stroke="#9a58e0" stroke-width="1.8"/><path d="M2 21c3-1 4-4 6-2s3 0 4-1 2 2 4 1" fill="none" stroke="#9a58e0" stroke-width="1.6"/></svg>
<div class="t" style="left:1365px;top:611px;font-size:15px;color:#4b4b4b">Fill &amp; Sign</div>
<svg style="left:1331px;top:652px" width="24" height="24" viewBox="0 0 24 24"><path d="M2 2h10l4 4v6" fill="none" stroke="#e8c21a" stroke-width="1.8"/><path d="M2 2v20h8" fill="none" stroke="#e8c21a" stroke-width="1.8"/><path d="M11 12h12v8h-6l-3 3v-3h-3z" fill="#e8c21a"/><path d="M14 15.5h6M14 17.5h5" stroke="#fff" stroke-width="1"/></svg>
<div class="t" style="left:1365px;top:656px;font-size:15px;color:#4b4b4b">Send for Review</div>
<svg style="left:1331px;top:698px" width="24" height="24" viewBox="0 0 24 24"><path d="M3 20l9-9a5 5 0 0 1 6-7l-3 3 1 2 2 1 3-3a5 5 0 0 1-7 6l-9 9a2 2 0 0 1-2-2z" fill="#555"/><circle cx="18" cy="18" r="5.5" fill="#555" stroke="#fafafa" stroke-width="1.2"/><path d="M15 18h6M18 15v6" stroke="#fff" stroke-width="1.6"/></svg>
<div class="t" style="left:1365px;top:702px;font-size:15px;color:#4b4b4b">More Tools</div>

<div class="t" style="left:1345px;top:749px;font-size:12.6px;font-weight:700;color:#444">Create, edit and sign PDF</div>
<div class="t" style="left:1360px;top:765px;font-size:12.6px;font-weight:700;color:#444">forms &amp; agreements</div>
<div class="t" style="left:1383px;top:791px;font-size:11.5px;color:#2d74cf">Start Free Trial</div>

<!-- taskbar -->
<div class="a" style="left:0;top:824px;width:1536px;height:40px;background:#0a0c13"></div>
<svg style="left:16px;top:836px" width="16" height="16" viewBox="0 0 16 16"><path d="M0 2.2l6.5-.9v6.2H0zM7.3 1.2L16 0v7.5H7.3zM0 8.3h6.5v6.3L0 13.8zM7.3 8.3H16V16l-8.7-1.2z" fill="#fff"/></svg>
<div class="a" style="left:48px;top:824px;width:344px;height:40px;background:#f0f0f0;border-top:1px solid #cfcfcf"></div>
<svg style="left:57px;top:833px" width="22" height="22" viewBox="0 0 22 22"><circle cx="11" cy="11" r="9" fill="none" stroke="#111" stroke-width="2.6"/></svg>
<div class="t" style="left:88px;top:837px;font-size:13.7px;color:#555">Type here to search</div>
<svg style="left:365px;top:835px" width="13" height="18" viewBox="0 0 13 18"><rect x="3.5" y="1" width="6" height="11" rx="1" fill="none" stroke="#555" stroke-width="1.5"/><path d="M1 8.5v1.5a5.5 5.5 0 0 0 11 0V8.5M6.5 15.5v1.5M3.5 17h6" fill="none" stroke="#555" stroke-width="1.4"/></svg>
<svg style="left:407px;top:835px" width="18" height="17" viewBox="0 0 18 17"><path d="M1 1v2h11V1M1 16v-2h11v2" fill="none" stroke="#ddd" stroke-width="1.2"/><rect x="1.5" y="5" width="10" height="7" fill="none" stroke="#ddd" stroke-width="1.4"/><path d="M16 0.5v16" stroke="#ddd" stroke-width="1.3"/><circle cx="16" cy="6.5" r="1.5" fill="#fff"/></svg>
<!-- edge -->
<svg style="left:456px;top:831px" width="24" height="24" viewBox="0 0 24 24"><path d="M3 13c0-6 4.5-10.5 10-10.5 6 0 9 4.5 9 9.5v2H8.5c.5 3 3 4.5 6 4.5 2.5 0 4.5-.7 6.5-2v4.5c-2 1.200-4.5 1.800-7 1.800C7 22.8 3 18.5 3 13zm5.8-2.800h8c-.2-2.500-1.800-3.800-3.900-3.800-2.100 0-3.800 1.400-4.100 3.800z" fill="#1e7fd8"/></svg>
<div class="a" style="left:448px;top:862px;width:41px;height:2px;background:#76b9ed"></div>
<!-- explorer -->
<svg style="left:505px;top:833px" width="23" height="20" viewBox="0 0 23 20"><path d="M0 2h8l2 2h13v16H0z" fill="#e8b93e"/><rect x="0" y="6" width="23" height="14" fill="#f8d775"/><rect x="6" y="13" width="11" height="3" fill="#3a8ee6"/><rect x="9" y="16" width="5" height="4" fill="#3a8ee6"/></svg>
<div class="a" style="left:497px;top:862px;width:41px;height:2px;background:#76b9ed"></div>
<!-- teams -->
<svg style="left:553px;top:832px" width="30" height="26" viewBox="0 0 30 26"><circle cx="17" cy="4" r="3" fill="#7b83eb"/><circle cx="23" cy="6" r="2.3" fill="#5059c9"/><rect x="13" y="8" width="13" height="12" rx="3" fill="#7b83eb"/><rect x="2" y="5" width="13" height="13" rx="1" fill="#4b53bc"/><path d="M5 8h7M8.5 8v7" stroke="#fff" stroke-width="1.8"/><circle cx="20" cy="19" r="6.5" fill="#c4314b"/><text x="20" y="22.5" text-anchor="middle" font-size="9" font-family="Liberation Sans" font-weight="700" fill="#fff">9+</text></svg>
<div class="a" style="left:547px;top:862px;width:41px;height:2px;background:#76b9ed"></div>
<!-- skype -->
<svg style="left:604px;top:832px" width="26" height="25" viewBox="0 0 26 25"><circle cx="11" cy="11" r="9.5" fill="#1ba2e6"/><circle cx="5" cy="5" r="4" fill="#1ba2e6"/><circle cx="17" cy="17" r="4" fill="#1ba2e6"/><text x="11" y="16" text-anchor="middle" font-size="14" font-family="Liberation Sans" font-weight="700" fill="#fff">S</text><circle cx="20" cy="19" r="5" fill="#e81123" stroke="#0a0c13" stroke-width="1.2"/></svg>
<div class="a" style="left:596px;top:862px;width:41px;height:2px;background:#76b9ed"></div>
<!-- outlook -->
<svg style="left:653px;top:832px" width="28" height="26" viewBox="0 0 28 26"><rect x="9" y="2" width="16" height="14" fill="#1a6fc9"/><rect x="9" y="2" width="8" height="7" fill="#28a8ea"/><rect x="1" y="6" width="13" height="13" rx="1" fill="#0f5aa8"/><circle cx="7.5" cy="12.5" r="3.5" fill="none" stroke="#fff" stroke-width="1.8"/><rect x="14" y="15" width="13" height="10" fill="#f0c872"/><path d="M14 15l6.5 5 6.5-5" fill="none" stroke="#c9993a" stroke-width="1"/></svg>
<div class="a" style="left:645px;top:862px;width:41px;height:2px;background:#76b9ed"></div>
<!-- acrobat active -->
<div class="a" style="left:691px;top:824px;width:48px;height:40px;background:#3b3d42"></div>
<svg style="left:703px;top:832px" width="24" height="24" viewBox="0 0 24 24"><rect x="1" y="1" width="22" height="22" fill="#c4141b"/><path d="M6 17c3-5 4.5-9 4.5-10.500s-1.200-1.300-1.200 0c0 2.500 3.500 7.500 7.500 8.500-3 0-7.500 1-10.800 2z" fill="none" stroke="#fff" stroke-width="1.2"/></svg>
<div class="a" style="left:692px;top:862px;width:46px;height:2px;background:#76b9ed"></div>
<!-- word -->
<svg style="left:750px;top:832px" width="26" height="24" viewBox="0 0 26 24"><rect x="8" y="1" width="17" height="22" rx="1" fill="#2b7cd3"/><rect x="8" y="8" width="17" height="8" fill="#185abd"/><rect x="1" y="5" width="13" height="14" rx="1" fill="#1a52b0"/><text x="7.5" y="16" text-anchor="middle" font-size="10" font-family="Liberation Sans" font-weight="700" fill="#fff">W</text></svg>
<div class="a" style="left:745px;top:862px;width:41px;height:2px;background:#76b9ed"></div>
<!-- remote -->
<svg style="left:802px;top:832px" width="28" height="26" viewBox="0 0 28 26"><rect x="3" y="3" width="14" height="14" fill="#ddd" stroke="#a33" stroke-width="1"/><circle cx="10" cy="10" r="5" fill="#fff" stroke="#c33" stroke-width="1.5"/><rect x="15" y="1" width="9" height="6" fill="#d33"/><circle cx="19" cy="19" r="6" fill="#bbb"/><path d="M15.5 19h7M17 17l-2 2 2 2M21 17l2 2-2 2" fill="none" stroke="#2a8" stroke-width="1.2"/></svg>
<div class="a" style="left:794px;top:862px;width:41px;height:2px;background:#76b9ed"></div>
<!-- tray -->
<div class="a" style="left:1533px;top:824px;width:1px;height:40px;background:#555"></div>
<svg style="left:1259px;top:838px" width="13" height="8" viewBox="0 0 13 8"><path d="M1 7l5.5-5.5L12 7" fill="none" stroke="#ddd" stroke-width="1.3"/></svg>
<svg style="left:1281px;top:835px" width="18" height="14" viewBox="0 0 18 14"><path d="M3 0v4M6 0v4M2 4h5v3" fill="none" stroke="#ddd" stroke-width="1.1"/><rect x="4" y="6" width="12" height="7" fill="none" stroke="#ddd" stroke-width="1.2"/><rect x="5.5" y="7.5" width="9" height="4" fill="#ddd"/><rect x="16" y="8" width="1.5" height="3" fill="#ddd"/></svg>
<svg style="left:1307px;top:835px" width="14" height="14" viewBox="0 0 14 14"><path d="M1 13A12 12 0 0 1 13 1M4 13A9 9 0 0 1 13 4M7 13A6 6 0 0 1 13 7" fill="none" stroke="#ccc" stroke-width="1.2"/><circle cx="12" cy="12" r="1.3" fill="#fff"/></svg>
<svg style="left:1328px;top:835px" width="17" height="15" viewBox="0 0 17 15"><path d="M1 5h3l4-4v13l-4-4H1z" fill="none" stroke="#ddd" stroke-width="1.2"/><path d="M10.5 5a3 3 0 0 1 0 5M13 3a6 6 0 0 1 0 9" fill="none" stroke="#ddd" stroke-width="1.2"/></svg>
<svg style="left:1353px;top:836px" width="18" height="12" viewBox="0 0 18 12"><path d="M3.5 11.5a3 3 0 0 1 0-6 4.5 4.5 0 0 1 8-2 3.5 3.5 0 0 1 4 3 2.5 2.5 0 0 1 0 5z" fill="#2b87e3"/></svg>
<div class="t" style="left:1380px;top:838px;font-size:12px;color:#fff">ENG</div>
<div class="t" style="left:1433px;top:829px;font-size:12px;color:#fff">15:05</div>
<div class="t" style="left:1416px;top:848px;font-size:12px;color:#fff">18/06/2020</div>
<svg style="left:1493px;top:834px" width="30" height="26" viewBox="0 0 30 26"><path d="M2 2h16v11H8l-3 3v-3H2z" fill="#fff"/><path d="M5 6h10M5 9h10" stroke="#0a0c13" stroke-width="1"/><circle cx="20" cy="16" r="8" fill="#444" stroke="#0a0c13" stroke-width="1.5"/><text x="20" y="20" text-anchor="middle" font-size="11" font-family="Liberation Sans" fill="#fff">23</text></svg>
</body></html>
